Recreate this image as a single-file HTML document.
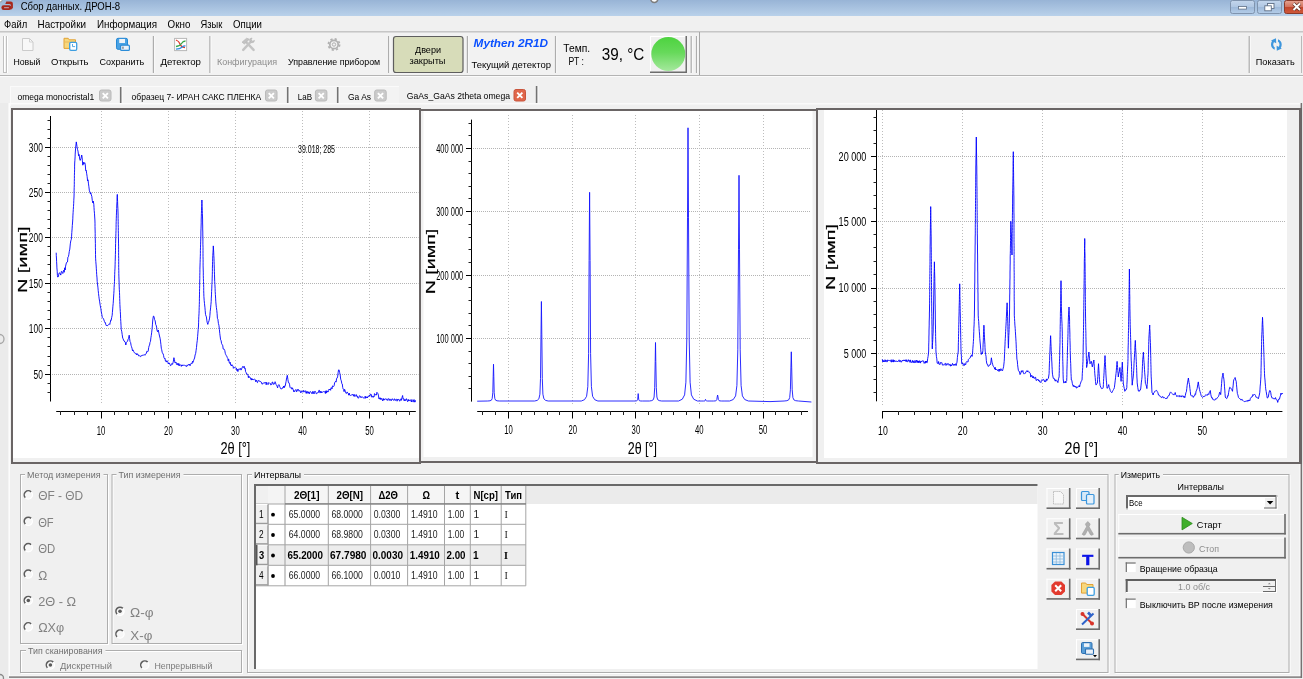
<!DOCTYPE html>
<html lang="ru"><head><meta charset="utf-8"><title>Сбор данных. ДРОН-8</title>
<style>
html,body{margin:0;padding:0;background:#f0f0f0;overflow:hidden}
body{width:1303px;height:679px;font-family:"Liberation Sans",sans-serif}
svg{display:block;position:absolute;left:0;top:0;will-change:transform}
text{white-space:pre}
</style></head><body>
<svg width="1303" height="679" viewBox="0 0 1303 679" font-family="'Liberation Sans', Arial, sans-serif" shape-rendering="auto">
<rect x="0" y="0" width="1303" height="679" fill="#f0f0f0" />
<defs><linearGradient id="tb" x1="0" y1="0" x2="0" y2="1"><stop offset="0" stop-color="#98b4d6"/><stop offset="1" stop-color="#b9d1ea"/></linearGradient><linearGradient id="wb" x1="0" y1="0" x2="0" y2="1"><stop offset="0" stop-color="#c4d6ec"/><stop offset="0.5" stop-color="#b0c7e3"/><stop offset="0.5" stop-color="#9db8d9"/><stop offset="1" stop-color="#b4cde8"/></linearGradient><linearGradient id="wc" x1="0" y1="0" x2="0" y2="1"><stop offset="0" stop-color="#e5a493"/><stop offset="0.5" stop-color="#d2705a"/><stop offset="0.5" stop-color="#c1452c"/><stop offset="1" stop-color="#d0593a"/></linearGradient><linearGradient id="gc" x1="0" y1="0" x2="0" y2="1"><stop offset="0" stop-color="#4dd33f"/><stop offset="0.45" stop-color="#66d95a"/><stop offset="1" stop-color="#a5e89d"/></linearGradient></defs>
<rect x="0" y="0" width="1303" height="16" fill="url(#tb)" />
<path d="M5.3 3.9 L6.3 1.6 H10.8 Q12.9 1.6 12.9 3.8 V8 L11.1 9.7 V5.8 Q11.1 4 9.4 3.9 Z" fill="#a8281c"/>
<rect x="1.4" y="5.2" width="10" height="4.9" rx="2.3" fill="#a6261b"/>
<rect x="4" y="7" width="5" height="1.3" rx="0.6" fill="#b9919a"/>
<circle cx="-0.2" cy="-0.4" r="2.5" fill="#fff" stroke="#a2a2a2" stroke-width="1.1"/>
<text x="20.7" y="10.0" font-size="10.3" textLength="99.5" lengthAdjust="spacingAndGlyphs">Сбор данных. ДРОН-8</text>
<rect x="1230.5" y="0.5" width="24" height="13" rx="2" fill="url(#wb)" stroke="#7f93ad"/>
<rect x="1238.5" y="6.5" width="8" height="2.6" fill="#fff" stroke="#5f6f86" stroke-width="0.8"/>
<rect x="1257.5" y="0.5" width="24" height="13" rx="2" fill="url(#wb)" stroke="#7f93ad"/>
<rect x="1267.5" y="3.5" width="6.5" height="5" fill="#fff" stroke="#5f6f86" stroke-width="0.9"/>
<rect x="1264.8" y="5.8" width="6.5" height="5" fill="#fff" stroke="#5f6f86" stroke-width="0.9"/>
<rect x="1284.5" y="0.5" width="24" height="13" rx="2" fill="url(#wc)" stroke="#8a3a2a"/>
<path d="M1293.5 3.5 l6.5 6.5 M1300 3.5 l-6.5 6.5" stroke="#5a2a20" stroke-width="3.2" fill="none"/>
<path d="M1293.5 3.5 l6.5 6.5 M1300 3.5 l-6.5 6.5" stroke="#ffffff" stroke-width="2" fill="none"/>
<circle cx="654.3" cy="-1.2" r="3.6" fill="#fff" stroke="#7d7d7d" stroke-width="1.5"/>
<text x="4.1" y="27.6" font-size="10.2" textLength="23.1" lengthAdjust="spacingAndGlyphs">Файл</text>
<text x="37.5" y="27.6" font-size="10.2" textLength="48.5" lengthAdjust="spacingAndGlyphs">Настройки</text>
<text x="97.0" y="27.6" font-size="10.2" textLength="60.0" lengthAdjust="spacingAndGlyphs">Информация</text>
<text x="167.6" y="27.6" font-size="10.2" textLength="22.8" lengthAdjust="spacingAndGlyphs">Окно</text>
<text x="200.5" y="27.6" font-size="10.2" textLength="21.8" lengthAdjust="spacingAndGlyphs">Язык</text>
<text x="233.0" y="27.6" font-size="10.2" textLength="29.0" lengthAdjust="spacingAndGlyphs">Опции</text>
<rect x="0" y="31" width="1303" height="1" fill="#c6c6c6" />
<rect x="0" y="32" width="1303" height="1" fill="#dadada" />
<rect x="0" y="33" width="699" height="42" fill="#f2f2f2" />
<rect x="0" y="75" width="1303" height="1" fill="#b4b4b4" />
<rect x="0" y="76" width="1303" height="1" fill="#fbfbfb" />
<rect x="3" y="36" width="1" height="37" fill="#c0c0c0" />
<rect x="4" y="36" width="1" height="37" fill="#ffffff" />
<rect x="6" y="36" width="1" height="37" fill="#c0c0c0" />
<rect x="7" y="36" width="1" height="37" fill="#ffffff" />
<rect x="3" y="72" width="4" height="1" fill="#c0c0c0" />
<text x="13.4" y="65.3" font-size="9.5" textLength="27.0" lengthAdjust="spacingAndGlyphs">Новый</text>
<text x="51.1" y="65.3" font-size="9.5" textLength="37.4" lengthAdjust="spacingAndGlyphs">Открыть</text>
<text x="99.5" y="65.3" font-size="9.5" textLength="44.8" lengthAdjust="spacingAndGlyphs">Сохранить</text>
<text x="160.4" y="65.3" font-size="9.5" textLength="40.6" lengthAdjust="spacingAndGlyphs">Детектор</text>
<text x="217.0" y="65.3" font-size="9.5" fill="#8c8c8c" textLength="60.0" lengthAdjust="spacingAndGlyphs">Конфигурация</text>
<text x="288.0" y="65.3" font-size="9.5" textLength="92.2" lengthAdjust="spacingAndGlyphs">Управление прибором</text>
<text x="1255.8" y="65.3" font-size="9.5" textLength="38.9" lengthAdjust="spacingAndGlyphs">Показать</text>
<rect x="152.8" y="36" width="1.3" height="37" fill="#adadad" />
<rect x="154.1" y="36" width="1" height="37" fill="#fafafa" />
<rect x="209.3" y="36" width="1.3" height="37" fill="#adadad" />
<rect x="210.6" y="36" width="1" height="37" fill="#fafafa" />
<rect x="388" y="36" width="1.3" height="37" fill="#adadad" />
<rect x="389.3" y="36" width="1" height="37" fill="#fafafa" />
<rect x="466.8" y="36" width="1.3" height="37" fill="#adadad" />
<rect x="468.1" y="36" width="1" height="37" fill="#fafafa" />
<rect x="554.9" y="36" width="1.3" height="37" fill="#adadad" />
<rect x="556.2" y="36" width="1" height="37" fill="#fafafa" />
<rect x="690.6" y="36" width="1.3" height="37" fill="#adadad" />
<rect x="691.9" y="36" width="1" height="37" fill="#fafafa" />
<rect x="695.9" y="36" width="1.3" height="37" fill="#adadad" />
<rect x="697.2" y="36" width="1" height="37" fill="#fafafa" />
<rect x="1248.6" y="36" width="1.3" height="37" fill="#adadad" />
<rect x="1249.9" y="36" width="1" height="37" fill="#fafafa" />
<rect x="1301" y="36" width="1" height="37" fill="#b9b9b9" />
<rect x="699" y="32" width="1" height="43" fill="#a6a6a6" />
<path d="M22.5 38.5 h7 l3.5 3.5 v8.5 h-10.5 z" fill="#f8f8f8" stroke="#c6c6c6" stroke-width="0.9"/>
<path d="M29.5 38.5 v3.5 h3.5" fill="none" stroke="#cfcfcf" stroke-width="0.9"/>
<path d="M64 38.3 h4.2 l1 1.5 h6.3 v8.6 h-11.5 z" fill="#f7d77d" stroke="#e2a234" stroke-width="1"/>
<path d="M64.5 42 h10.5" stroke="#e9b85a"/>
<rect x="69.7" y="42.3" width="7" height="8" rx="1.2" fill="#ffffff" stroke="#3e9ee0" stroke-width="1.3"/>
<path d="M72.5 44 v2.6 h2.6" fill="none" stroke="#59a9e3" stroke-width="1"/>
<rect x="116.5" y="38.3" width="11" height="11" rx="1.5" fill="#49a2e4" stroke="#2589d6" stroke-width="1"/>
<rect x="119.2" y="39" width="5.8" height="4" fill="#eef3f8"/>
<rect x="120.6" y="45.2" width="8.8" height="5.2" rx="1" fill="#e9f0f8" stroke="#2b8cd8" stroke-width="1.2"/>
<rect x="122.2" y="46.6" width="1.5" height="2.2" fill="#7b8a99"/>
<rect x="174.6" y="38.4" width="12" height="12.2" fill="#ffffff" stroke="#b7b7b7" stroke-width="1"/>
<path d="M176 40 q3 1 4 4 t5 3.5" fill="none" stroke="#e0362c" stroke-width="1.3"/>
<path d="M176 46.5 q4 -0.5 5.5 -3 t4 -2.5" fill="none" stroke="#3aa84a" stroke-width="1.3"/>
<path d="M176 49.2 q4 -0.3 6 -2 t3.5 -1.2" fill="none" stroke="#2f8fe0" stroke-width="1.3"/>
<path d="M243.2 49.8 L251 41.5 M253.6 49.8 L246 42" stroke="#c4c4c4" stroke-width="2.5" stroke-linecap="round" fill="none"/>
<path d="M242 42.2 L246.6 38.2 L249.4 39.2 L244.4 44 Z" fill="#c3c3c3" stroke="#b2b2b2" stroke-width="0.6"/>
<path d="M249.5 40.2 q0.4 -2.2 2.6 -2.2 l-1 1.8 l1.6 1.4 l1.8 -0.8 q-0.2 2.4 -2.6 2.4 q-1.2 0 -2.4 -2.6 z" fill="#c3c3c3" stroke="#b2b2b2" stroke-width="0.6"/>
<circle cx="334" cy="44.5" r="4.2" fill="none" stroke="#b1b1b1" stroke-width="1.7"/>
<circle cx="334" cy="44.5" r="5.6" fill="none" stroke="#b1b1b1" stroke-width="1.7" stroke-dasharray="2.2 2.2"/>
<circle cx="334" cy="44.5" r="1.7" fill="none" stroke="#a9a9a9" stroke-width="0.9"/>
<path d="M1274.5 39.5 q-3.5 1.2 -3.5 5 q0 3.5 3.6 5.2 l0.2 -2.2 q-1.6 -1 -1.6 -3 q0 -2 1.6 -3.2 z" fill="#3d96dd"/>
<path d="M1271 40.6 l5 -2.4 l0.2 5 z" fill="#3d96dd"/>
<path d="M1278.2 49.5 q3.5 -1.2 3.5 -5 q0 -3.5 -3.6 -5.2 l-0.2 2.2 q1.6 1 1.6 3 q0 2 -1.6 3.2 z" fill="#3d96dd"/>
<path d="M1281.8 48.4 l-5 2.4 l-0.2 -5 z" fill="#3d96dd"/>
<rect x="393.5" y="36.5" width="69.5" height="36" rx="2.5" fill="#d7dcb9" stroke="#5e5e5e" stroke-width="1.2"/>
<text x="428.0" y="53.0" font-size="9.7" text-anchor="middle" textLength="26.0" lengthAdjust="spacingAndGlyphs">Двери</text>
<text x="427.5" y="63.5" font-size="9.7" text-anchor="middle" textLength="36.0" lengthAdjust="spacingAndGlyphs">закрыты</text>
<text x="473.6" y="47.2" font-size="10.4" fill="#0a50ff" font-weight="bold" font-style="italic" textLength="74.5" lengthAdjust="spacingAndGlyphs">Mythen 2R1D</text>
<text x="471.5" y="68.0" font-size="9.2" textLength="79.5" lengthAdjust="spacingAndGlyphs">Текущий детектор</text>
<text x="563.3" y="52.0" font-size="10.2" textLength="26.8" lengthAdjust="spacingAndGlyphs">Темп.</text>
<text x="568.5" y="65.0" font-size="10.2" textLength="15.5" lengthAdjust="spacingAndGlyphs">РТ :</text>
<text x="601.8" y="60.0" font-size="16" textLength="42.5" lengthAdjust="spacingAndGlyphs">39, °C</text>
<rect x="650" y="36" width="37" height="37" fill="#f0f0f0" />
<rect x="650" y="36" width="37" height="1" fill="#ffffff" />
<rect x="650" y="36" width="1" height="37" fill="#ffffff" />
<rect x="650" y="71.5" width="37" height="1.5" fill="#6d6d6d" />
<rect x="685.5" y="36" width="1.5" height="37" fill="#6d6d6d" />
<circle cx="668.3" cy="54" r="17" fill="url(#gc)"/>
<rect x="10" y="86" width="389" height="1" fill="#fafafa" />
<rect x="10" y="86" width="1" height="20" fill="#fafafa" />
<rect x="11" y="87" width="388" height="17" fill="#f3f3f3" />
<rect x="9" y="103.2" width="1292" height="1.2" fill="#fdfdfd" />
<rect x="8.6" y="103.2" width="1.3" height="574" fill="#fdfdfd" />
<text x="17.5" y="99.8" font-size="9.8" textLength="76.7" lengthAdjust="spacingAndGlyphs">omega monocristal1</text>
<rect x="99.5" y="90" width="11.5" height="11" rx="2" fill="#cbcbcb" stroke="#bababa" stroke-width="1"/>
<path d="M102.7 93.2 l5.2 5.2 M107.9 93.2 l-5.2 5.2" stroke="#ffffff" stroke-width="1.9" fill="none"/>
<rect x="119.9" y="87" width="1.8" height="16" fill="#727272" />
<rect x="121.7" y="87" width="0.9" height="16" fill="#fafafa" />
<text x="131.6" y="99.8" font-size="9.8" textLength="129.7" lengthAdjust="spacingAndGlyphs">образец 7- ИРАН САКС ПЛЕНКА</text>
<rect x="265.5" y="90" width="11.5" height="11" rx="2" fill="#cbcbcb" stroke="#bababa" stroke-width="1"/>
<path d="M268.7 93.2 l5.2 5.2 M273.9 93.2 l-5.2 5.2" stroke="#ffffff" stroke-width="1.9" fill="none"/>
<rect x="286.9" y="87" width="1.8" height="16" fill="#727272" />
<rect x="288.7" y="87" width="0.9" height="16" fill="#fafafa" />
<text x="297.8" y="99.8" font-size="9.8" textLength="14.2" lengthAdjust="spacingAndGlyphs">LaB</text>
<rect x="315.4" y="90" width="11.5" height="11" rx="2" fill="#cbcbcb" stroke="#bababa" stroke-width="1"/>
<path d="M318.6 93.2 l5.2 5.2 M323.8 93.2 l-5.2 5.2" stroke="#ffffff" stroke-width="1.9" fill="none"/>
<rect x="336.9" y="87" width="1.8" height="16" fill="#727272" />
<rect x="338.7" y="87" width="0.9" height="16" fill="#fafafa" />
<text x="348.0" y="99.8" font-size="9.8" textLength="23.0" lengthAdjust="spacingAndGlyphs">Ga As</text>
<rect x="374.7" y="90" width="11.5" height="11" rx="2" fill="#cbcbcb" stroke="#bababa" stroke-width="1"/>
<path d="M377.9 93.2 l5.2 5.2 M383.1 93.2 l-5.2 5.2" stroke="#ffffff" stroke-width="1.9" fill="none"/>
<text x="406.8" y="99.4" font-size="9.8" textLength="103.2" lengthAdjust="spacingAndGlyphs">GaAs_GaAs 2theta omega</text>
<rect x="514" y="89.5" width="11.5" height="11.5" rx="2" fill="#e0664a" stroke="#c9553d" stroke-width="1"/>
<path d="M517.2 92.7 l5.2 5.2 M522.4 92.7 l-5.2 5.2" stroke="#ffffff" stroke-width="1.9" fill="none"/>
<rect x="535.8" y="86" width="1.8" height="17" fill="#727272" />
<rect x="537.6" y="86" width="0.9" height="17" fill="#fafafa" />
<rect x="0" y="103" width="8" height="576" fill="#ebebeb" />
<circle cx="-0.5" cy="339" r="4.5" fill="none" stroke="#a6a6a6" stroke-width="1.3"/>
<circle cx="0" cy="678" r="3.5" fill="none" stroke="#8a8a8a" stroke-width="1.3"/>
<rect x="9" y="675.5" width="1291" height="1" fill="#fbfbfb" />
<rect x="1299.5" y="464" width="1" height="212" fill="#fbfbfb" />
<rect x="9" y="676.4" width="1293" height="1.4" fill="#767272" />
<rect x="1300.6" y="103" width="1.5" height="575" fill="#767272" />
<rect x="21.5" y="475.5" width="87" height="169" fill="none" stroke="#ffffff"/>
<rect x="20.5" y="474.5" width="87" height="169" fill="none" stroke="#adadad"/>
<rect x="25" y="469" width="78.5" height="10" fill="#f0f0f0" />
<text x="27.0" y="478.1" font-size="9.2" fill="#6f6f6f" textLength="73.5" lengthAdjust="spacingAndGlyphs">Метод измерения</text>
<rect x="113" y="475.5" width="129.5" height="169" fill="none" stroke="#ffffff"/>
<rect x="112" y="474.5" width="129.5" height="169" fill="none" stroke="#adadad"/>
<rect x="116.5" y="469" width="67" height="10" fill="#f0f0f0" />
<text x="118.5" y="478.1" font-size="9.2" fill="#6f6f6f" textLength="62.0" lengthAdjust="spacingAndGlyphs">Тип измерения</text>
<rect x="21.5" y="651.5" width="221" height="22" fill="none" stroke="#ffffff"/>
<rect x="20.5" y="650.5" width="221" height="22" fill="none" stroke="#adadad"/>
<rect x="26" y="645" width="79.5" height="10" fill="#f0f0f0" />
<text x="28.0" y="654.1" font-size="9.2" fill="#6f6f6f" textLength="74.5" lengthAdjust="spacingAndGlyphs">Тип сканирования</text>
<circle cx="28.3" cy="494.9" r="4.3" fill="#f7f7f7"/>
<path d="M31.2 492 A4.1 4.1 0 0 0 25.4 497.8" fill="none" stroke="#5c5c5c" stroke-width="1.5"/>
<path d="M31.2 492 A4.1 4.1 0 0 1 25.4 497.8" fill="none" stroke="#ffffff" stroke-width="1.3"/>
<text x="38.2" y="500.3" font-size="12" fill="#828282" textLength="45.0" lengthAdjust="spacingAndGlyphs">ΘF - ΘD</text>
<circle cx="28.3" cy="521.3" r="4.3" fill="#f7f7f7"/>
<path d="M31.2 518.4 A4.1 4.1 0 0 0 25.4 524.2" fill="none" stroke="#5c5c5c" stroke-width="1.5"/>
<path d="M31.2 518.4 A4.1 4.1 0 0 1 25.4 524.2" fill="none" stroke="#ffffff" stroke-width="1.3"/>
<text x="38.2" y="526.7" font-size="12" fill="#828282" textLength="15.5" lengthAdjust="spacingAndGlyphs">ΘF</text>
<circle cx="28.3" cy="547.7" r="4.3" fill="#f7f7f7"/>
<path d="M31.2 544.8 A4.1 4.1 0 0 0 25.4 550.6" fill="none" stroke="#5c5c5c" stroke-width="1.5"/>
<path d="M31.2 544.8 A4.1 4.1 0 0 1 25.4 550.6" fill="none" stroke="#ffffff" stroke-width="1.3"/>
<text x="38.2" y="553.1" font-size="12" fill="#828282" textLength="17.0" lengthAdjust="spacingAndGlyphs">ΘD</text>
<circle cx="28.3" cy="574.1" r="4.3" fill="#f7f7f7"/>
<path d="M31.2 571.2 A4.1 4.1 0 0 0 25.4 577" fill="none" stroke="#5c5c5c" stroke-width="1.5"/>
<path d="M31.2 571.2 A4.1 4.1 0 0 1 25.4 577" fill="none" stroke="#ffffff" stroke-width="1.3"/>
<text x="38.2" y="579.5" font-size="12" fill="#828282" textLength="9.0" lengthAdjust="spacingAndGlyphs">Ω</text>
<circle cx="28.3" cy="600.5" r="4.3" fill="#f7f7f7"/>
<path d="M31.2 597.6 A4.1 4.1 0 0 0 25.4 603.4" fill="none" stroke="#5c5c5c" stroke-width="1.5"/>
<path d="M31.2 597.6 A4.1 4.1 0 0 1 25.4 603.4" fill="none" stroke="#ffffff" stroke-width="1.3"/>
<circle cx="28.3" cy="600.5" r="1.8" fill="#5a5a5a"/>
<text x="38.2" y="605.9" font-size="12" fill="#828282" textLength="38.0" lengthAdjust="spacingAndGlyphs">2Θ - Ω</text>
<circle cx="28.3" cy="626.9" r="4.3" fill="#f7f7f7"/>
<path d="M31.2 624 A4.1 4.1 0 0 0 25.4 629.8" fill="none" stroke="#5c5c5c" stroke-width="1.5"/>
<path d="M31.2 624 A4.1 4.1 0 0 1 25.4 629.8" fill="none" stroke="#ffffff" stroke-width="1.3"/>
<text x="38.2" y="632.3" font-size="12" fill="#828282" textLength="26.0" lengthAdjust="spacingAndGlyphs">ΩXφ</text>
<circle cx="120" cy="611.3" r="4.3" fill="#f7f7f7"/>
<path d="M122.9 608.4 A4.1 4.1 0 0 0 117.1 614.2" fill="none" stroke="#5c5c5c" stroke-width="1.5"/>
<path d="M122.9 608.4 A4.1 4.1 0 0 1 117.1 614.2" fill="none" stroke="#ffffff" stroke-width="1.3"/>
<circle cx="120" cy="611.3" r="1.8" fill="#5a5a5a"/>
<text x="130.0" y="617.0" font-size="12" fill="#828282" textLength="23.5" lengthAdjust="spacingAndGlyphs">Ω-φ</text>
<circle cx="120" cy="634" r="4.3" fill="#f7f7f7"/>
<path d="M122.9 631.1 A4.1 4.1 0 0 0 117.1 636.9" fill="none" stroke="#5c5c5c" stroke-width="1.5"/>
<path d="M122.9 631.1 A4.1 4.1 0 0 1 117.1 636.9" fill="none" stroke="#ffffff" stroke-width="1.3"/>
<text x="130.3" y="639.7" font-size="12" fill="#828282" textLength="22.0" lengthAdjust="spacingAndGlyphs">X-φ</text>
<circle cx="50.4" cy="665" r="4.3" fill="#f7f7f7"/>
<path d="M53.3 662.1 A4.1 4.1 0 0 0 47.5 667.9" fill="none" stroke="#5c5c5c" stroke-width="1.5"/>
<path d="M53.3 662.1 A4.1 4.1 0 0 1 47.5 667.9" fill="none" stroke="#ffffff" stroke-width="1.3"/>
<circle cx="50.4" cy="665" r="1.8" fill="#5a5a5a"/>
<text x="60.0" y="669.0" font-size="9.2" fill="#7a7a7a" textLength="52.0" lengthAdjust="spacingAndGlyphs">Дискретный</text>
<circle cx="144.8" cy="665" r="4.3" fill="#f7f7f7"/>
<path d="M147.7 662.1 A4.1 4.1 0 0 0 141.9 667.9" fill="none" stroke="#5c5c5c" stroke-width="1.5"/>
<path d="M147.7 662.1 A4.1 4.1 0 0 1 141.9 667.9" fill="none" stroke="#ffffff" stroke-width="1.3"/>
<text x="154.4" y="669.0" font-size="9.2" fill="#7a7a7a" textLength="58.0" lengthAdjust="spacingAndGlyphs">Непрерывный</text>
<rect x="248.5" y="475.5" width="860.5" height="198" fill="none" stroke="#ffffff"/>
<rect x="247.5" y="474.5" width="860.5" height="198" fill="none" stroke="#adadad"/>
<rect x="252" y="469" width="52" height="10" fill="#f0f0f0" />
<text x="254.0" y="478.1" font-size="9.2" textLength="47.0" lengthAdjust="spacingAndGlyphs">Интервалы</text>
<rect x="254" y="484" width="783.5" height="185" fill="#ffffff" />
<rect x="254" y="484" width="783.5" height="2" fill="#696969" />
<rect x="254" y="484" width="2" height="185" fill="#696969" />
<rect x="256" y="486" width="781.5" height="18" fill="#ebebeb" />
<rect x="256" y="486" width="12" height="100" fill="#f0f0f0" />
<rect x="268" y="486" width="17" height="18" fill="#f4f4f4" />
<rect x="285" y="486" width="240.8" height="18" fill="#f5f5f5" />
<rect x="268" y="544.8" width="257.8" height="20.5" fill="#ededed" />
<rect x="284.5" y="486" width="1" height="99.8" fill="#a5a5a5" />
<rect x="327.8" y="486" width="1" height="99.8" fill="#a5a5a5" />
<rect x="370.1" y="486" width="1" height="99.8" fill="#a5a5a5" />
<rect x="407.1" y="486" width="1" height="99.8" fill="#a5a5a5" />
<rect x="444" y="486" width="1" height="99.8" fill="#a5a5a5" />
<rect x="469.8" y="486" width="1" height="99.8" fill="#a5a5a5" />
<rect x="500.7" y="486" width="1" height="99.8" fill="#a5a5a5" />
<rect x="525.3" y="486" width="1" height="99.8" fill="#a5a5a5" />
<rect x="267.5" y="504" width="1" height="82" fill="#6e6e6e" />
<rect x="284.5" y="504" width="1" height="82" fill="#c4c4c4" />
<rect x="256" y="503.5" width="269.8" height="1" fill="#a5a5a5" />
<rect x="256" y="523.8" width="269.8" height="1" fill="#a5a5a5" />
<rect x="256" y="544.3" width="269.8" height="1" fill="#a5a5a5" />
<rect x="256" y="564.8" width="269.8" height="1" fill="#a5a5a5" />
<rect x="256" y="585.3" width="269.8" height="1" fill="#a5a5a5" />
<rect x="285" y="503.3" width="241" height="1.2" fill="#7a7a7a" />
<rect x="256" y="504" width="11.5" height="1" fill="#ffffff" />
<rect x="256" y="522.8" width="11.5" height="1" fill="#8a8a8a" />
<rect x="256" y="524.3" width="11.5" height="1" fill="#ffffff" />
<rect x="256" y="543.3" width="11.5" height="1" fill="#8a8a8a" />
<rect x="256" y="544.8" width="11.5" height="1" fill="#ffffff" />
<rect x="256" y="563.8" width="11.5" height="1" fill="#8a8a8a" />
<rect x="256" y="565.3" width="11.5" height="1" fill="#ffffff" />
<rect x="256" y="584.3" width="11.5" height="1" fill="#8a8a8a" />
<rect x="256" y="544.8" width="1.5" height="20.5" fill="#555" />
<text x="294.0" y="499.0" font-size="10.3" font-weight="bold" textLength="25.5" lengthAdjust="spacingAndGlyphs">2Θ[1]</text>
<text x="336.5" y="499.0" font-size="10.3" font-weight="bold" textLength="26.5" lengthAdjust="spacingAndGlyphs">2Θ[N]</text>
<text x="378.5" y="499.0" font-size="10.3" font-weight="bold" textLength="19.5" lengthAdjust="spacingAndGlyphs">Δ2Θ</text>
<text x="422.5" y="499.0" font-size="10.3" font-weight="bold" textLength="7.5" lengthAdjust="spacingAndGlyphs">Ω</text>
<text x="455.5" y="499.0" font-size="10.3" font-weight="bold" textLength="3.8" lengthAdjust="spacingAndGlyphs">t</text>
<text x="473.5" y="499.0" font-size="10.3" font-weight="bold" textLength="24.5" lengthAdjust="spacingAndGlyphs">N[cp]</text>
<text x="505.0" y="499.0" font-size="10.3" font-weight="bold" textLength="17.0" lengthAdjust="spacingAndGlyphs">Тип</text>
<text x="259.0" y="518.0" font-size="10.6" textLength="4.6" lengthAdjust="spacingAndGlyphs">1</text>
<circle cx="273" cy="514.7" r="1.9" fill="#000"/>
<text x="288.8" y="518.0" font-size="10.1" fill="#222" textLength="31.3" lengthAdjust="spacingAndGlyphs">65.0000</text>
<text x="331.4" y="518.0" font-size="10.1" fill="#222" textLength="31.5" lengthAdjust="spacingAndGlyphs">68.0000</text>
<text x="373.8" y="518.0" font-size="10.1" fill="#222" textLength="26.5" lengthAdjust="spacingAndGlyphs">0.0300</text>
<text x="411.0" y="518.0" font-size="10.1" fill="#222" textLength="26.5" lengthAdjust="spacingAndGlyphs">1.4910</text>
<text x="447.8" y="518.0" font-size="10.1" fill="#222" textLength="16.5" lengthAdjust="spacingAndGlyphs">1.00</text>
<text x="473.5" y="518.0" font-size="10.1" fill="#222">1</text>
<text x="504.5" y="518.0" font-size="10.1" fill="#222" font-family="Liberation Serif, serif">I</text>
<text x="259.0" y="538.3" font-size="10.6" textLength="4.6" lengthAdjust="spacingAndGlyphs">2</text>
<circle cx="273" cy="535" r="1.9" fill="#000"/>
<text x="288.8" y="538.3" font-size="10.1" fill="#222" textLength="31.3" lengthAdjust="spacingAndGlyphs">64.0000</text>
<text x="331.4" y="538.3" font-size="10.1" fill="#222" textLength="31.5" lengthAdjust="spacingAndGlyphs">68.9800</text>
<text x="373.8" y="538.3" font-size="10.1" fill="#222" textLength="26.5" lengthAdjust="spacingAndGlyphs">0.0300</text>
<text x="411.0" y="538.3" font-size="10.1" fill="#222" textLength="26.5" lengthAdjust="spacingAndGlyphs">1.4910</text>
<text x="447.8" y="538.3" font-size="10.1" fill="#222" textLength="16.5" lengthAdjust="spacingAndGlyphs">1.00</text>
<text x="473.5" y="538.3" font-size="10.1" fill="#222">1</text>
<text x="504.5" y="538.3" font-size="10.1" fill="#222" font-family="Liberation Serif, serif">I</text>
<text x="259.0" y="558.8" font-size="10.6" font-weight="bold" textLength="5.2" lengthAdjust="spacingAndGlyphs">3</text>
<circle cx="273" cy="555.5" r="1.9" fill="#000"/>
<text x="287.5" y="558.8" font-size="10.1" font-weight="bold" textLength="35.5" lengthAdjust="spacingAndGlyphs">65.2000</text>
<text x="330.0" y="558.8" font-size="10.1" font-weight="bold" textLength="36.5" lengthAdjust="spacingAndGlyphs">67.7980</text>
<text x="372.5" y="558.8" font-size="10.1" font-weight="bold" textLength="30.5" lengthAdjust="spacingAndGlyphs">0.0030</text>
<text x="409.8" y="558.8" font-size="10.1" font-weight="bold" textLength="30.0" lengthAdjust="spacingAndGlyphs">1.4910</text>
<text x="446.5" y="558.8" font-size="10.1" font-weight="bold" textLength="19.0" lengthAdjust="spacingAndGlyphs">2.00</text>
<text x="473.0" y="558.8" font-size="10.1" font-weight="bold">1</text>
<text x="504.0" y="558.8" font-size="10.1" font-weight="bold" font-family="Liberation Serif, serif">I</text>
<text x="259.0" y="579.3" font-size="10.6" textLength="4.6" lengthAdjust="spacingAndGlyphs">4</text>
<circle cx="273" cy="576" r="1.9" fill="#000"/>
<text x="288.8" y="579.3" font-size="10.1" fill="#222" textLength="31.3" lengthAdjust="spacingAndGlyphs">66.0000</text>
<text x="331.4" y="579.3" font-size="10.1" fill="#222" textLength="31.5" lengthAdjust="spacingAndGlyphs">66.1000</text>
<text x="373.8" y="579.3" font-size="10.1" fill="#222" textLength="26.5" lengthAdjust="spacingAndGlyphs">0.0010</text>
<text x="411.0" y="579.3" font-size="10.1" fill="#222" textLength="26.5" lengthAdjust="spacingAndGlyphs">1.4910</text>
<text x="447.8" y="579.3" font-size="10.1" fill="#222" textLength="16.5" lengthAdjust="spacingAndGlyphs">1.00</text>
<text x="473.5" y="579.3" font-size="10.1" fill="#222">1</text>
<text x="504.5" y="579.3" font-size="10.1" fill="#222" font-family="Liberation Serif, serif">I</text>
<rect x="1046.5" y="488" width="24" height="21" fill="#f0f0f0" />
<rect x="1046.5" y="488" width="24" height="1" fill="#ffffff" />
<rect x="1046.5" y="488" width="1" height="21" fill="#ffffff" />
<rect x="1046.5" y="507.4" width="24" height="1.6" fill="#6c6c6c" />
<rect x="1068.9" y="488" width="1.6" height="21" fill="#6c6c6c" />
<rect x="1076" y="488" width="24" height="21" fill="#f0f0f0" />
<rect x="1076" y="488" width="24" height="1" fill="#ffffff" />
<rect x="1076" y="488" width="1" height="21" fill="#ffffff" />
<rect x="1076" y="507.4" width="24" height="1.6" fill="#6c6c6c" />
<rect x="1098.4" y="488" width="1.6" height="21" fill="#6c6c6c" />
<rect x="1046.5" y="518.3" width="24" height="21" fill="#f0f0f0" />
<rect x="1046.5" y="518.3" width="24" height="1" fill="#ffffff" />
<rect x="1046.5" y="518.3" width="1" height="21" fill="#ffffff" />
<rect x="1046.5" y="537.7" width="24" height="1.6" fill="#6c6c6c" />
<rect x="1068.9" y="518.3" width="1.6" height="21" fill="#6c6c6c" />
<rect x="1076" y="518.3" width="24" height="21" fill="#f0f0f0" />
<rect x="1076" y="518.3" width="24" height="1" fill="#ffffff" />
<rect x="1076" y="518.3" width="1" height="21" fill="#ffffff" />
<rect x="1076" y="537.7" width="24" height="1.6" fill="#6c6c6c" />
<rect x="1098.4" y="518.3" width="1.6" height="21" fill="#6c6c6c" />
<rect x="1046.5" y="548.5" width="24" height="21" fill="#f0f0f0" />
<rect x="1046.5" y="548.5" width="24" height="1" fill="#ffffff" />
<rect x="1046.5" y="548.5" width="1" height="21" fill="#ffffff" />
<rect x="1046.5" y="567.9" width="24" height="1.6" fill="#6c6c6c" />
<rect x="1068.9" y="548.5" width="1.6" height="21" fill="#6c6c6c" />
<rect x="1076" y="548.5" width="24" height="21" fill="#f0f0f0" />
<rect x="1076" y="548.5" width="24" height="1" fill="#ffffff" />
<rect x="1076" y="548.5" width="1" height="21" fill="#ffffff" />
<rect x="1076" y="567.9" width="24" height="1.6" fill="#6c6c6c" />
<rect x="1098.4" y="548.5" width="1.6" height="21" fill="#6c6c6c" />
<rect x="1046.5" y="578.7" width="24" height="21" fill="#f0f0f0" />
<rect x="1046.5" y="578.7" width="24" height="1" fill="#ffffff" />
<rect x="1046.5" y="578.7" width="1" height="21" fill="#ffffff" />
<rect x="1046.5" y="598.1" width="24" height="1.6" fill="#6c6c6c" />
<rect x="1068.9" y="578.7" width="1.6" height="21" fill="#6c6c6c" />
<rect x="1076" y="578.7" width="24" height="21" fill="#f0f0f0" />
<rect x="1076" y="578.7" width="24" height="1" fill="#ffffff" />
<rect x="1076" y="578.7" width="1" height="21" fill="#ffffff" />
<rect x="1076" y="598.1" width="24" height="1.6" fill="#6c6c6c" />
<rect x="1098.4" y="578.7" width="1.6" height="21" fill="#6c6c6c" />
<rect x="1076" y="609" width="24" height="21" fill="#f0f0f0" />
<rect x="1076" y="609" width="24" height="1" fill="#ffffff" />
<rect x="1076" y="609" width="1" height="21" fill="#ffffff" />
<rect x="1076" y="628.4" width="24" height="1.6" fill="#6c6c6c" />
<rect x="1098.4" y="609" width="1.6" height="21" fill="#6c6c6c" />
<rect x="1076" y="639.2" width="24" height="21" fill="#f0f0f0" />
<rect x="1076" y="639.2" width="24" height="1" fill="#ffffff" />
<rect x="1076" y="639.2" width="1" height="21" fill="#ffffff" />
<rect x="1076" y="658.6" width="24" height="1.6" fill="#6c6c6c" />
<rect x="1098.4" y="639.2" width="1.6" height="21" fill="#6c6c6c" />
<path d="M1053.5 491.5 h7 l3 3 v9.5 h-10 z" fill="#f7f7f7" stroke="#b8b8b8" stroke-dasharray="1.2 0.7"/>
<rect x="1081.5" y="491.5" width="7.5" height="9" rx="1" fill="#d6e9f8" stroke="#3a95dc" stroke-width="1.2"/>
<rect x="1086.5" y="494.5" width="7.5" height="9.5" rx="1" fill="#e4f0fa" stroke="#3a95dc" stroke-width="1.2"/>
<text x="1053.0" y="534.8" font-size="17.5" fill="#bcbcbc" font-weight="bold" textLength="11.0" lengthAdjust="spacingAndGlyphs">Σ</text>
<path d="M1087.8 521.5 l2.4 2.6 l-1.2 2.6 l4.4 7.6 q-1.6 1.6 -3 0.4 l-2.6 -5 l-2.6 5 q-1.6 1.2 -3 -0.4 l4.4 -7.6 l-1.2 -2.6 z" fill="#b0b0b0" stroke="#9c9c9c" stroke-width="0.6"/>
<rect x="1052.5" y="552.5" width="11.5" height="12" fill="#eaf3fb" stroke="#3a8fd6" stroke-width="1.2"/>
<path d="M1053 556 h11 M1053 559 h11 M1053 562 h11 M1056.3 553 v11 M1060 553 v11" stroke="#8db9de" stroke-width="0.8"/>
<text x="1082.2" y="564.6" font-size="14.5" fill="#0a12e8" font-weight="bold" textLength="11.0" lengthAdjust="spacingAndGlyphs" stroke="#0a12e8" stroke-width="0.5">T</text>
<path d="M1055 581.5 h6.4 l3.6 3.6 v6.4 l-3.6 3.6 h-6.4 l-3.6 -3.6 v-6.4 z" fill="#e23a2e"/>
<path d="M1055.2 585.2 l6 6 M1061.2 585.2 l-6 6" stroke="#fff" stroke-width="2"/>
<path d="M1081.5 583 h4.2 l1 1.5 h6.3 v8.6 h-11.5 z" fill="#f7d77d" stroke="#e2a234" stroke-width="1"/>
<rect x="1087.2" y="587.3" width="7" height="8" rx="1.2" fill="#ffffff" stroke="#3e9ee0" stroke-width="1.3"/>
<path d="M1081.5 613 l11.5 11.5" stroke="#d8342a" stroke-width="2"/>
<path d="M1093.5 613.5 l-11.5 11" stroke="#2e62c9" stroke-width="2"/>
<circle cx="1082.5" cy="614" r="2" fill="#d8342a"/><circle cx="1092" cy="623.5" r="2" fill="#d8342a"/>
<path d="M1088 612.5 l3 3" stroke="#2e62c9" stroke-width="2.6"/>
<rect x="1081.5" y="642.5" width="10.5" height="11" rx="1.2" fill="#5a9fd8" stroke="#2d6fb0" stroke-width="1"/>
<rect x="1084" y="643.3" width="5.5" height="3.6" fill="#eef3f8"/>
<rect x="1085.5" y="649" width="8" height="5.2" rx="0.8" fill="#e9f0f8" stroke="#2d6fb0" stroke-width="1.1"/>
<path d="M1093 655 h4 l-2 2.2 z" fill="#000"/>
<rect x="1116" y="475.5" width="174" height="198" fill="none" stroke="#ffffff"/>
<rect x="1115" y="474.5" width="174" height="198" fill="none" stroke="#adadad"/>
<rect x="1118.7" y="469" width="44.3" height="10" fill="#f0f0f0" />
<text x="1120.7" y="478.1" font-size="9.2" textLength="39.3" lengthAdjust="spacingAndGlyphs">Измерить</text>
<text x="1177.6" y="490.2" font-size="8.9" textLength="46.4" lengthAdjust="spacingAndGlyphs">Интервалы</text>
<rect x="1126" y="495" width="151.5" height="14.5" fill="#ffffff" />
<rect x="1126" y="495" width="151.5" height="2" fill="#696969" />
<rect x="1126" y="495" width="2" height="14.5" fill="#696969" />
<rect x="1126" y="508.5" width="151.5" height="1" fill="#ffffff" />
<rect x="1276.5" y="495" width="1" height="14.5" fill="#ffffff" />
<text x="1129.0" y="506.0" font-size="9.2" textLength="13.5" lengthAdjust="spacingAndGlyphs">Все</text>
<rect x="1264" y="497" width="12.5" height="11.5" fill="#f0f0f0" />
<rect x="1264" y="497" width="12.5" height="1" fill="#fff" />
<rect x="1264" y="497" width="1" height="11.5" fill="#fff" />
<rect x="1264" y="507.5" width="12.5" height="1" fill="#696969" />
<rect x="1275.5" y="497" width="1" height="11.5" fill="#696969" />
<path d="M1266.8 501 h6.6 l-3.3 3.6 z" fill="#000"/>
<rect x="1118.3" y="514" width="167.5" height="20.5" fill="#f0f0f0" />
<rect x="1118.3" y="514" width="167.5" height="1" fill="#ffffff" />
<rect x="1118.3" y="514" width="1" height="20.5" fill="#ffffff" />
<rect x="1118.3" y="532.9" width="167.5" height="1.6" fill="#6c6c6c" />
<rect x="1284.2" y="514" width="1.6" height="20.5" fill="#6c6c6c" />
<path d="M1182 517.3 l10.3 6.2 l-10.3 6.4 z" fill="#3fae2a" stroke="#2c8a1c" stroke-width="0.8"/>
<text x="1196.8" y="528.3" font-size="9.3" textLength="24.8" lengthAdjust="spacingAndGlyphs">Старт</text>
<rect x="1118.3" y="537.5" width="167.5" height="21" fill="#f0f0f0" />
<rect x="1118.3" y="537.5" width="167.5" height="1" fill="#ffffff" />
<rect x="1118.3" y="537.5" width="1" height="21" fill="#ffffff" />
<rect x="1118.3" y="556.9" width="167.5" height="1.6" fill="#6c6c6c" />
<rect x="1284.2" y="537.5" width="1.6" height="21" fill="#6c6c6c" />
<circle cx="1188.8" cy="547.5" r="5.6" fill="#bdbdbd" stroke="#a8a8a8" stroke-width="1"/>
<text x="1199.0" y="551.5" font-size="9.3" fill="#8c8c8c" textLength="20.0" lengthAdjust="spacingAndGlyphs">Стоп</text>
<rect x="1125.7" y="562.4" width="10" height="9.6" fill="#ffffff" />
<rect x="1125.7" y="562.4" width="10" height="1.2" fill="#6e6e6e" />
<rect x="1125.7" y="562.4" width="1.2" height="9.6" fill="#6e6e6e" />
<rect x="1125.7" y="598.5" width="10" height="9.6" fill="#ffffff" />
<rect x="1125.7" y="598.5" width="10" height="1.2" fill="#6e6e6e" />
<rect x="1125.7" y="598.5" width="1.2" height="9.6" fill="#6e6e6e" />
<text x="1139.7" y="571.6" font-size="9.2" textLength="78.0" lengthAdjust="spacingAndGlyphs">Вращение образца</text>
<text x="1139.7" y="607.6" font-size="9.2" textLength="133.2" lengthAdjust="spacingAndGlyphs">Выключить ВР после измерения</text>
<rect x="1125.7" y="579" width="151" height="13.8" fill="#f0f0f0" />
<rect x="1125.7" y="579" width="151" height="2" fill="#5f5f5f" />
<rect x="1125.7" y="579" width="2" height="13.8" fill="#5f5f5f" />
<rect x="1125.7" y="592" width="151" height="1" fill="#ffffff" />
<rect x="1276" y="579" width="1" height="13.8" fill="#ffffff" />
<text x="1194.0" y="589.5" font-size="9.4" fill="#8c8c8c" text-anchor="middle" textLength="32.0" lengthAdjust="spacingAndGlyphs">1.0 об/с</text>
<rect x="1263" y="581" width="13" height="5.5" fill="#f0f0f0" />
<rect x="1263" y="586" width="13" height="1" fill="#696969" />
<rect x="1275" y="581" width="1" height="11" fill="#696969" />
<rect x="1263" y="591" width="13" height="1" fill="#696969" />
<path d="M1267.8 584.3 h3 l-1.5 -1.6 z M1267.8 588 h3 l-1.5 1.6 z" fill="#8c8c8c"/>
<rect x="11" y="108" width="410" height="356" fill="#6a6565" />
<rect x="13" y="110" width="406" height="352" fill="#f0f0f0" />
<rect x="13" y="110" width="406" height="348" fill="#ffffff" />
<line x1="52" y1="374.5" x2="418.5" y2="374.5" stroke="#b4b4b4" stroke-width="1" stroke-dasharray="1 1"/>
<line x1="52" y1="328.5" x2="418.5" y2="328.5" stroke="#b4b4b4" stroke-width="1" stroke-dasharray="1 1"/>
<line x1="52" y1="283.5" x2="418.5" y2="283.5" stroke="#b4b4b4" stroke-width="1" stroke-dasharray="1 1"/>
<line x1="52" y1="237.5" x2="418.5" y2="237.5" stroke="#b4b4b4" stroke-width="1" stroke-dasharray="1 1"/>
<line x1="52" y1="192.5" x2="418.5" y2="192.5" stroke="#b4b4b4" stroke-width="1" stroke-dasharray="1 1"/>
<line x1="52" y1="147.5" x2="418.5" y2="147.5" stroke="#b4b4b4" stroke-width="1" stroke-dasharray="1 1"/>
<line x1="101.5" y1="111" x2="101.5" y2="405" stroke="#bdbdbd" stroke-width="1" stroke-dasharray="1 2"/>
<line x1="168.5" y1="111" x2="168.5" y2="405" stroke="#bdbdbd" stroke-width="1" stroke-dasharray="1 2"/>
<line x1="235.5" y1="111" x2="235.5" y2="405" stroke="#bdbdbd" stroke-width="1" stroke-dasharray="1 2"/>
<line x1="302.5" y1="111" x2="302.5" y2="405" stroke="#bdbdbd" stroke-width="1" stroke-dasharray="1 2"/>
<line x1="369.5" y1="111" x2="369.5" y2="405" stroke="#bdbdbd" stroke-width="1" stroke-dasharray="1 2"/>
<rect x="50" y="116" width="1" height="285.5" fill="#000" />
<rect x="56.2" y="411" width="359.6" height="1" fill="#000" />
<rect x="101" y="411" width="1" height="7.5" fill="#000" />
<rect x="168" y="411" width="1" height="7.5" fill="#000" />
<rect x="235" y="411" width="1" height="7.5" fill="#000" />
<rect x="302" y="411" width="1" height="7.5" fill="#000" />
<rect x="369" y="411" width="1" height="7.5" fill="#000" />
<rect x="60" y="411" width="1" height="4" fill="#222" />
<rect x="74" y="411" width="1" height="4" fill="#222" />
<rect x="87" y="411" width="1" height="4" fill="#222" />
<rect x="114" y="411" width="1" height="4" fill="#222" />
<rect x="128" y="411" width="1" height="4" fill="#222" />
<rect x="141" y="411" width="1" height="4" fill="#222" />
<rect x="154" y="411" width="1" height="4" fill="#222" />
<rect x="181" y="411" width="1" height="4" fill="#222" />
<rect x="195" y="411" width="1" height="4" fill="#222" />
<rect x="208" y="411" width="1" height="4" fill="#222" />
<rect x="222" y="411" width="1" height="4" fill="#222" />
<rect x="248" y="411" width="1" height="4" fill="#222" />
<rect x="262" y="411" width="1" height="4" fill="#222" />
<rect x="275" y="411" width="1" height="4" fill="#222" />
<rect x="289" y="411" width="1" height="4" fill="#222" />
<rect x="316" y="411" width="1" height="4" fill="#222" />
<rect x="329" y="411" width="1" height="4" fill="#222" />
<rect x="342" y="411" width="1" height="4" fill="#222" />
<rect x="356" y="411" width="1" height="4" fill="#222" />
<rect x="383" y="411" width="1" height="4" fill="#222" />
<rect x="396" y="411" width="1" height="4" fill="#222" />
<rect x="409" y="411" width="1" height="4" fill="#222" />
<rect x="45" y="374" width="5.5" height="1" fill="#000" />
<rect x="45" y="328" width="5.5" height="1" fill="#000" />
<rect x="45" y="283" width="5.5" height="1" fill="#000" />
<rect x="45" y="237" width="5.5" height="1" fill="#000" />
<rect x="45" y="192" width="5.5" height="1" fill="#000" />
<rect x="45" y="147" width="5.5" height="1" fill="#000" />
<rect x="47.5" y="392" width="3" height="1" fill="#222" />
<rect x="47.5" y="383" width="3" height="1" fill="#222" />
<rect x="47.5" y="365" width="3" height="1" fill="#222" />
<rect x="47.5" y="356" width="3" height="1" fill="#222" />
<rect x="47.5" y="346" width="3" height="1" fill="#222" />
<rect x="47.5" y="337" width="3" height="1" fill="#222" />
<rect x="47.5" y="319" width="3" height="1" fill="#222" />
<rect x="47.5" y="310" width="3" height="1" fill="#222" />
<rect x="47.5" y="301" width="3" height="1" fill="#222" />
<rect x="47.5" y="292" width="3" height="1" fill="#222" />
<rect x="47.5" y="274" width="3" height="1" fill="#222" />
<rect x="47.5" y="264" width="3" height="1" fill="#222" />
<rect x="47.5" y="255" width="3" height="1" fill="#222" />
<rect x="47.5" y="246" width="3" height="1" fill="#222" />
<rect x="47.5" y="228" width="3" height="1" fill="#222" />
<rect x="47.5" y="219" width="3" height="1" fill="#222" />
<rect x="47.5" y="210" width="3" height="1" fill="#222" />
<rect x="47.5" y="201" width="3" height="1" fill="#222" />
<rect x="47.5" y="183" width="3" height="1" fill="#222" />
<rect x="47.5" y="174" width="3" height="1" fill="#222" />
<rect x="47.5" y="165" width="3" height="1" fill="#222" />
<rect x="47.5" y="156" width="3" height="1" fill="#222" />
<rect x="47.5" y="138" width="3" height="1" fill="#222" />
<rect x="47.5" y="129" width="3" height="1" fill="#222" />
<rect x="47.5" y="120" width="3" height="1" fill="#222" />
<text x="42.8" y="378.7" font-size="12" text-anchor="end" textLength="9.3" lengthAdjust="spacingAndGlyphs">50</text>
<text x="42.8" y="332.8" font-size="12" text-anchor="end" textLength="14.0" lengthAdjust="spacingAndGlyphs">100</text>
<text x="42.8" y="287.6" font-size="12" text-anchor="end" textLength="14.0" lengthAdjust="spacingAndGlyphs">150</text>
<text x="42.8" y="241.7" font-size="12" text-anchor="end" textLength="14.0" lengthAdjust="spacingAndGlyphs">200</text>
<text x="42.8" y="197.2" font-size="12" text-anchor="end" textLength="14.0" lengthAdjust="spacingAndGlyphs">250</text>
<text x="42.8" y="151.7" font-size="12" text-anchor="end" textLength="14.0" lengthAdjust="spacingAndGlyphs">300</text>
<text x="101.1" y="434.6" font-size="12" text-anchor="middle" textLength="8.6" lengthAdjust="spacingAndGlyphs">10</text>
<text x="168.4" y="434.6" font-size="12" text-anchor="middle" textLength="8.6" lengthAdjust="spacingAndGlyphs">20</text>
<text x="235.4" y="434.6" font-size="12" text-anchor="middle" textLength="8.6" lengthAdjust="spacingAndGlyphs">30</text>
<text x="302.6" y="434.6" font-size="12" text-anchor="middle" textLength="8.6" lengthAdjust="spacingAndGlyphs">40</text>
<text x="369.6" y="434.6" font-size="12" text-anchor="middle" textLength="8.6" lengthAdjust="spacingAndGlyphs">50</text>
<text transform="translate(23,259.8) rotate(-90)" x="0" y="4.4" font-size="12.2" text-anchor="middle" textLength="66.5" lengthAdjust="spacingAndGlyphs" stroke="#000" stroke-width="0.18">N [имп]</text>
<text x="220.4" y="454.4" font-size="16.5" textLength="30.0" lengthAdjust="spacingAndGlyphs">2θ [°]</text>
<text x="298.0" y="153.3" font-size="10.5" textLength="37.0" lengthAdjust="spacingAndGlyphs">39.018; 285</text>
<polyline points="56.2,252.7 56.3,255.7 56.5,259.0 56.6,261.7 56.8,265.0 56.9,267.9 57.2,271.2 57.4,275.3 57.7,277.0 58.4,276.7 59.0,273.1 59.6,272.8 60.2,273.8 60.8,275.1 61.3,271.5 61.8,271.4 62.3,272.6 62.8,273.5 63.3,271.4 63.8,270.2 64.2,272.3 64.7,267.8 65.2,270.0 65.6,266.1 66.1,264.0 66.5,262.5 67.0,262.0 67.5,262.0 67.9,257.1 68.4,256.7 68.8,254.8 69.3,251.4 69.8,249.1 70.3,243.9 70.8,240.8 71.3,239.4 71.6,236.2 71.8,232.5 72.1,228.9 72.3,225.6 72.6,222.0 72.8,218.8 72.9,215.9 73.1,212.7 73.3,209.4 73.5,206.4 73.7,203.3 73.8,200.3 74.0,197.0 74.1,193.9 74.1,190.9 74.2,187.7 74.3,184.6 74.3,181.6 74.4,178.4 74.4,175.4 74.5,172.2 74.6,169.2 74.6,166.1 74.7,163.0 74.9,160.2 75.1,156.9 75.2,154.1 75.4,151.0 75.6,148.1 76.3,141.9 77.0,146.6 77.5,149.4 78.0,151.1 78.6,155.8 79.1,154.5 79.7,159.1 80.2,160.4 81.0,158.3 81.7,155.0 82.1,157.2 82.4,160.8 82.8,165.2 83.3,162.2 83.8,164.2 84.3,162.9 84.8,162.6 85.3,164.9 85.7,170.6 86.2,170.1 86.6,173.2 87.1,176.3 87.6,180.9 88.0,179.8 88.5,183.9 88.9,186.8 89.4,190.8 89.9,192.0 90.4,193.8 90.8,192.7 91.3,194.9 91.8,196.3 92.3,200.6 92.8,202.9 93.3,201.1 93.8,204.3 94.0,207.4 94.2,210.5 94.5,213.8 94.7,217.0 94.9,220.0 95.0,223.2 95.0,226.7 95.1,230.0 95.2,233.3 95.2,236.7 95.3,240.0 95.4,243.6 95.4,247.2 95.5,250.8 95.5,254.4 95.6,258.2 95.8,261.5 96.1,264.9 96.3,268.2 96.5,271.3 96.7,274.7 97.0,277.9 97.2,281.5 97.5,284.0 97.9,287.1 98.2,290.4 98.5,293.4 98.9,296.7 99.2,298.9 99.7,301.9 100.2,305.3 100.8,308.3 101.3,312.0 101.8,314.3 102.3,317.6 102.8,318.2 103.3,318.4 103.9,319.9 104.4,321.4 104.9,322.7 105.4,322.6 105.9,324.9 106.5,325.8 107.0,325.1 107.5,325.7 108.0,325.3 108.5,324.7 108.9,324.6 109.4,323.8 109.8,324.4 110.3,322.2 110.8,320.0 111.2,320.3 111.7,317.4 112.2,315.2 112.4,312.3 112.7,309.0 112.9,306.2 113.2,303.4 113.4,300.1 113.6,297.0 113.8,293.7 114.0,290.6 114.1,287.5 114.3,284.6 114.5,281.4 114.6,278.1 114.7,274.7 114.8,271.3 115.0,268.1 115.1,264.8 115.2,261.4 115.3,258.0 115.4,254.4 115.5,250.8 115.5,247.2 115.6,243.6 115.7,240.0 115.8,236.8 115.9,233.7 116.0,230.6 116.1,227.5 116.1,224.5 116.2,221.4 116.3,218.2 116.4,215.2 116.5,212.1 116.7,208.6 116.8,205.0 117.0,201.4 117.1,197.9 117.3,194.4 117.4,197.9 117.6,201.5 117.7,205.1 117.9,208.6 118.0,212.0 118.1,215.1 118.1,218.3 118.2,221.3 118.2,224.5 118.3,227.6 118.3,230.7 118.4,233.8 118.4,236.9 118.5,240.0 118.5,243.1 118.6,246.1 118.6,249.2 118.6,252.3 118.6,255.3 118.7,258.4 118.7,261.5 118.7,264.5 118.7,267.6 118.8,270.6 118.8,273.6 118.9,276.9 119.0,279.9 119.1,282.9 119.2,286.1 119.3,289.2 119.5,292.3 119.6,295.3 119.7,298.4 119.8,301.4 119.9,304.4 120.1,308.2 120.3,311.5 120.5,314.9 120.6,318.4 120.8,321.6 121.0,325.2 121.2,329.3 121.7,331.2 122.2,334.6 122.7,338.1 123.2,338.9 123.7,340.6 124.2,340.7 124.8,342.0 125.3,342.2 125.8,345.0 126.3,342.7 126.7,342.0 127.2,341.4 127.6,341.2 128.1,339.1 128.6,338.3 129.2,335.2 129.6,338.5 130.1,341.8 130.6,342.5 131.1,345.4 131.5,346.7 132.0,348.2 132.5,350.8 133.0,349.9 133.6,351.3 134.1,352.5 134.6,352.8 135.1,352.9 135.6,353.6 136.0,354.0 136.5,354.8 136.9,353.4 137.4,354.7 137.9,354.3 138.3,354.6 138.8,356.0 139.2,355.7 139.7,356.0 140.2,356.4 140.6,356.7 141.1,355.4 141.6,355.7 142.1,355.4 142.5,355.3 143.0,355.6 143.5,354.9 143.9,355.0 144.4,354.7 144.9,355.3 145.3,354.1 145.8,354.0 146.3,353.6 146.8,351.3 147.2,351.5 147.7,351.8 148.2,351.0 148.7,347.6 149.1,345.9 149.6,345.0 150.0,342.4 150.5,341.3 150.9,337.8 151.3,335.4 151.7,332.2 152.1,328.8 152.4,324.9 152.6,322.0 152.9,318.9 153.4,316.1 153.9,316.3 154.6,319.6 155.2,320.9 155.7,324.5 156.1,325.1 156.6,327.1 157.0,330.2 157.5,331.7 158.3,330.0 158.9,333.2 159.5,336.0 160.1,338.3 160.5,341.1 160.9,344.4 161.3,348.2 161.7,349.7 162.2,352.3 162.6,353.4 163.1,353.6 163.6,355.7 164.0,357.7 164.5,358.7 165.0,358.2 165.4,361.0 165.9,361.1 166.4,362.1 166.9,360.6 167.4,361.6 167.8,361.6 168.3,364.0 168.8,363.1 169.3,363.0 169.9,364.1 170.4,365.6 170.9,365.6 171.4,364.6 171.9,363.5 172.5,364.4 173.0,362.7 173.4,361.1 173.9,357.7 174.4,359.5 175.0,363.0 175.5,362.6 176.0,362.0 176.5,364.4 176.9,364.0 177.4,364.7 177.9,363.2 178.4,365.4 178.9,363.6 179.4,365.7 179.8,364.8 180.3,364.7 180.8,365.4 181.3,366.4 181.7,365.0 182.2,364.8 182.7,365.9 183.2,365.3 183.6,365.2 184.1,365.4 184.6,365.3 185.0,365.6 185.5,365.7 185.9,365.6 186.4,366.6 186.8,365.4 187.3,365.8 187.8,364.9 188.2,365.2 188.7,364.3 189.1,364.8 189.6,364.1 190.0,365.8 190.5,364.7 191.0,363.3 191.5,363.3 192.0,363.8 192.5,361.3 193.0,362.4 193.5,360.8 194.1,359.1 194.6,358.0 195.1,355.0 195.7,353.3 196.1,350.3 196.5,347.4 196.9,343.2 197.3,340.3 197.6,336.7 197.9,333.1 198.2,329.5 198.5,326.0 198.6,322.8 198.7,319.8 198.8,316.7 199.0,313.8 199.1,310.7 199.2,307.6 199.3,304.6 199.4,301.4 199.4,298.2 199.5,294.9 199.5,291.7 199.6,288.5 199.7,285.2 199.7,282.0 199.8,278.8 199.8,275.6 199.9,272.3 199.9,269.2 200.0,266.0 200.1,262.8 200.2,259.7 200.3,256.7 200.4,253.5 200.4,250.4 200.5,247.2 200.6,244.2 200.7,241.1 200.8,238.0 200.9,235.0 200.9,232.0 201.0,228.9 201.1,226.0 201.2,222.9 201.2,220.0 201.3,216.9 201.4,213.5 201.5,210.2 201.7,206.7 201.8,203.4 201.9,200.0 202.0,203.5 202.1,206.8 202.3,210.2 202.4,213.7 202.5,217.0 202.6,220.0 202.6,223.0 202.7,226.0 202.7,229.0 202.8,232.0 202.8,235.0 202.9,238.0 202.9,241.1 202.9,244.2 203.0,247.3 203.0,250.4 203.0,253.5 203.0,256.6 203.1,259.7 203.1,262.8 203.1,265.9 203.2,269.0 203.3,272.1 203.3,275.3 203.4,278.3 203.5,281.4 203.6,284.5 203.7,287.5 203.7,290.6 203.8,293.8 203.9,296.6 204.2,300.6 204.5,303.7 204.9,307.2 205.2,310.6 205.5,314.3 206.0,316.0 206.4,316.9 206.9,320.9 207.3,322.9 207.8,324.4 208.4,322.5 209.0,320.8 209.6,318.1 209.9,315.3 210.2,311.5 210.6,307.9 210.9,304.7 211.2,301.6 211.3,298.1 211.5,294.9 211.6,291.6 211.8,288.1 211.9,284.7 212.1,281.4 212.2,278.1 212.3,274.8 212.4,271.5 212.4,268.2 212.5,264.8 212.6,261.5 212.7,258.1 212.8,255.3 213.0,252.1 213.2,249.1 213.3,245.9 213.5,249.0 213.7,252.1 213.8,255.2 214.0,258.2 214.1,261.5 214.2,264.8 214.3,268.1 214.4,271.5 214.5,274.8 214.6,278.0 214.7,281.5 214.9,284.6 215.1,288.3 215.2,291.6 215.4,294.6 215.6,298.1 215.8,301.8 216.1,305.1 216.4,307.6 216.8,310.6 217.1,313.5 217.4,318.3 217.9,319.2 218.4,323.4 218.9,325.2 219.4,329.4 219.8,333.7 220.1,335.9 220.6,339.8 221.1,340.6 221.6,343.6 222.2,344.8 222.7,345.2 223.2,349.0 223.7,349.2 224.2,349.2 224.8,350.6 225.3,353.4 225.8,354.7 226.3,355.7 226.8,356.1 227.3,357.6 227.8,358.4 228.2,360.8 228.7,359.2 229.2,362.3 229.7,363.4 230.2,362.2 230.7,365.1 231.1,364.9 231.6,366.0 232.0,364.7 232.5,365.4 233.0,366.0 233.4,368.3 233.9,367.6 234.3,367.4 234.8,368.1 235.3,368.0 235.8,367.6 236.4,368.1 236.9,370.6 237.4,369.3 237.9,371.6 238.4,369.3 238.9,369.1 239.4,369.5 240.0,368.3 240.5,368.6 241.0,370.1 241.5,369.0 242.1,367.9 242.6,366.5 243.1,367.3 243.6,367.4 244.1,366.2 244.6,368.4 245.1,368.0 245.6,371.7 246.1,372.5 246.6,374.1 247.0,374.6 247.4,374.3 247.9,374.3 248.4,377.7 248.8,376.1 249.3,377.4 249.8,377.3 250.3,377.5 250.8,379.1 251.3,380.1 251.8,378.3 252.3,379.8 252.8,379.0 253.3,379.9 253.7,379.6 254.2,379.1 254.7,379.2 255.2,379.5 255.6,381.7 256.1,380.6 256.6,380.0 257.0,382.2 257.5,382.6 258.0,381.1 258.4,380.4 258.9,380.8 259.3,380.7 259.8,381.6 260.3,381.1 260.7,381.7 261.2,382.0 261.6,383.1 262.1,384.3 262.6,383.9 263.0,382.9 263.5,382.9 263.9,383.3 264.4,382.9 264.9,382.8 265.3,382.0 265.8,382.7 266.2,384.8 266.7,382.3 267.1,383.5 267.6,383.9 268.1,384.6 268.5,382.7 269.0,382.9 269.4,382.9 269.9,383.4 270.4,383.5 270.8,385.0 271.3,384.6 271.8,384.6 272.2,382.0 272.7,382.0 273.2,384.0 273.7,384.5 274.1,383.2 274.6,383.5 275.1,381.7 275.5,382.8 276.0,384.4 276.5,385.2 277.1,386.4 277.6,387.9 278.1,385.5 278.6,384.8 279.1,384.7 279.6,386.3 280.1,387.3 280.5,388.6 281.0,388.5 281.5,388.8 282.0,388.9 282.5,387.7 283.1,387.8 283.6,386.0 284.1,387.9 284.6,386.0 285.1,386.4 285.6,384.0 286.1,381.3 286.7,377.8 287.3,375.3 287.9,379.4 288.4,382.5 288.9,382.5 289.5,384.2 290.0,387.4 290.5,387.9 290.9,387.7 291.4,387.6 291.9,389.2 292.4,387.8 292.9,389.0 293.3,389.9 293.8,391.8 294.3,390.8 294.7,391.6 295.2,390.3 295.7,389.6 296.1,389.6 296.6,391.8 297.1,391.0 297.6,389.8 298.0,389.0 298.5,390.4 299.0,391.2 299.4,390.7 299.9,390.4 300.4,391.9 300.9,392.9 301.4,391.1 301.8,390.8 302.3,391.9 302.8,391.8 303.2,392.1 303.7,390.3 304.2,391.7 304.7,391.8 305.1,391.3 305.6,390.7 306.1,393.3 306.5,391.6 307.0,393.4 307.5,391.6 307.9,391.6 308.4,393.2 308.9,391.8 309.3,393.8 309.8,392.5 310.3,391.6 310.7,391.7 311.2,392.3 311.6,393.0 312.1,393.9 312.6,391.5 313.0,392.3 313.5,391.7 314.0,394.0 314.4,391.6 314.9,391.3 315.4,391.4 315.8,392.4 316.3,393.9 316.8,393.5 317.3,392.6 317.9,393.1 318.4,392.5 318.9,390.3 319.4,390.3 319.9,392.9 320.4,392.7 320.9,391.0 321.4,392.9 321.9,392.1 322.4,392.2 323.0,392.1 323.5,391.7 324.0,391.2 324.5,391.8 324.9,391.9 325.4,393.5 325.8,390.8 326.3,393.1 326.8,390.7 327.2,390.9 327.7,392.1 328.1,392.0 328.6,390.6 329.1,389.0 329.6,389.8 330.1,389.1 330.6,390.3 331.0,387.7 331.5,387.8 332.0,388.9 332.5,385.9 333.0,386.2 333.5,386.7 334.1,385.8 334.6,382.8 335.1,382.0 335.6,381.3 336.1,382.1 336.6,378.4 337.1,378.2 337.6,376.9 338.1,372.8 338.5,370.1 339.0,369.7 339.6,372.4 340.2,375.0 340.7,379.2 341.3,380.8 341.8,383.5 342.3,384.0 342.7,387.4 343.2,389.2 343.6,389.6 344.1,391.7 344.6,389.3 345.0,390.3 345.5,391.4 345.9,393.2 346.4,393.5 346.9,392.2 347.3,392.1 347.8,393.0 348.2,393.5 348.7,395.2 349.2,393.1 349.7,395.1 350.1,395.1 350.6,395.5 351.1,395.4 351.6,395.1 352.0,394.4 352.5,394.5 353.0,394.8 353.5,396.2 353.9,394.2 354.4,394.7 354.9,396.6 355.4,395.2 355.9,394.7 356.3,394.7 356.8,396.4 357.3,395.9 357.8,397.9 358.2,397.8 358.7,398.2 359.2,396.1 359.7,395.7 360.1,395.9 360.6,397.2 361.1,397.9 361.6,397.1 362.0,396.5 362.5,397.1 362.9,397.7 363.4,397.8 363.8,398.0 364.3,398.3 364.7,397.8 365.2,396.2 365.6,398.3 366.1,396.7 366.5,397.5 367.0,396.9 367.4,398.0 367.9,396.4 368.3,396.5 368.8,396.5 369.3,395.1 369.9,396.2 370.4,394.1 370.9,394.0 371.3,394.8 371.8,397.2 372.2,396.4 372.7,396.2 373.2,397.4 373.6,396.3 374.1,396.8 374.5,393.6 375.0,394.1 375.5,395.0 376.0,394.9 376.4,395.0 376.9,392.3 377.4,392.9 377.9,393.6 378.4,395.1 378.9,398.7 379.4,397.8 379.9,399.2 380.4,397.8 380.9,399.6 381.3,398.6 381.8,398.4 382.3,400.2 382.8,401.0 383.3,398.5 383.7,400.0 384.2,400.1 384.6,398.9 385.1,399.4 385.6,398.7 386.0,399.0 386.5,399.1 386.9,400.2 387.4,400.4 387.9,399.0 388.3,398.5 388.8,399.4 389.2,400.5 389.7,399.1 390.2,399.5 390.6,399.2 391.1,400.9 391.5,400.2 392.0,398.8 392.5,398.9 392.9,399.7 393.4,400.2 393.9,400.4 394.3,398.8 394.8,399.0 395.3,400.5 395.7,399.7 396.2,399.3 396.6,399.3 397.1,401.2 397.6,399.3 398.0,400.0 398.5,399.4 399.0,399.5 399.4,400.9 399.9,401.2 400.4,399.3 400.8,398.8 401.3,400.4 402.0,397.5 402.6,395.5 403.1,399.1 403.6,398.6 404.1,400.7 404.6,399.5 405.0,401.0 405.5,399.9 405.9,399.1 406.4,398.7 406.8,400.4 407.3,400.8 407.7,401.7 408.2,399.3 408.6,401.0 409.1,400.3 409.6,400.7 410.0,399.6 410.5,400.0 410.9,400.8 411.4,402.0 411.9,399.5 412.3,400.7 412.8,401.6 413.2,402.1 413.7,399.8 414.2,399.6 414.6,402.0 415.1,402.1 415.5,400.6 416.0,400.7" fill="none" stroke="#0000ff" stroke-width="0.9" stroke-linejoin="round" stroke-opacity="1"/>
<rect x="419" y="109" width="399" height="354" fill="#6a6565" />
<rect x="421" y="111" width="395" height="350" fill="#f0f0f0" />
<rect x="423.5" y="111" width="389" height="346" fill="#ffffff" />
<line x1="473" y1="338.5" x2="810.5" y2="338.5" stroke="#b4b4b4" stroke-width="1" stroke-dasharray="1 1"/>
<line x1="473" y1="275.5" x2="810.5" y2="275.5" stroke="#b4b4b4" stroke-width="1" stroke-dasharray="1 1"/>
<line x1="473" y1="211.5" x2="810.5" y2="211.5" stroke="#b4b4b4" stroke-width="1" stroke-dasharray="1 1"/>
<line x1="473" y1="148.5" x2="810.5" y2="148.5" stroke="#b4b4b4" stroke-width="1" stroke-dasharray="1 1"/>
<line x1="508.5" y1="115" x2="508.5" y2="405" stroke="#bdbdbd" stroke-width="1" stroke-dasharray="1 2"/>
<line x1="572.5" y1="115" x2="572.5" y2="405" stroke="#bdbdbd" stroke-width="1" stroke-dasharray="1 2"/>
<line x1="635.5" y1="115" x2="635.5" y2="405" stroke="#bdbdbd" stroke-width="1" stroke-dasharray="1 2"/>
<line x1="699.5" y1="115" x2="699.5" y2="405" stroke="#bdbdbd" stroke-width="1" stroke-dasharray="1 2"/>
<line x1="763.5" y1="115" x2="763.5" y2="405" stroke="#bdbdbd" stroke-width="1" stroke-dasharray="1 2"/>
<rect x="471" y="119.6" width="1" height="282" fill="#000" />
<rect x="477.2" y="411" width="330.8" height="1" fill="#000" />
<rect x="508" y="411" width="1" height="7.5" fill="#000" />
<rect x="572" y="411" width="1" height="7.5" fill="#000" />
<rect x="635" y="411" width="1" height="7.5" fill="#000" />
<rect x="699" y="411" width="1" height="7.5" fill="#000" />
<rect x="763" y="411" width="1" height="7.5" fill="#000" />
<rect x="482" y="411" width="1" height="4" fill="#222" />
<rect x="495" y="411" width="1" height="4" fill="#222" />
<rect x="521" y="411" width="1" height="4" fill="#222" />
<rect x="534" y="411" width="1" height="4" fill="#222" />
<rect x="547" y="411" width="1" height="4" fill="#222" />
<rect x="559" y="411" width="1" height="4" fill="#222" />
<rect x="585" y="411" width="1" height="4" fill="#222" />
<rect x="597" y="411" width="1" height="4" fill="#222" />
<rect x="610" y="411" width="1" height="4" fill="#222" />
<rect x="623" y="411" width="1" height="4" fill="#222" />
<rect x="648" y="411" width="1" height="4" fill="#222" />
<rect x="661" y="411" width="1" height="4" fill="#222" />
<rect x="673" y="411" width="1" height="4" fill="#222" />
<rect x="686" y="411" width="1" height="4" fill="#222" />
<rect x="712" y="411" width="1" height="4" fill="#222" />
<rect x="724" y="411" width="1" height="4" fill="#222" />
<rect x="737" y="411" width="1" height="4" fill="#222" />
<rect x="750" y="411" width="1" height="4" fill="#222" />
<rect x="775" y="411" width="1" height="4" fill="#222" />
<rect x="788" y="411" width="1" height="4" fill="#222" />
<rect x="801" y="411" width="1" height="4" fill="#222" />
<rect x="466" y="338" width="5.5" height="1" fill="#000" />
<rect x="466" y="275" width="5.5" height="1" fill="#000" />
<rect x="466" y="211" width="5.5" height="1" fill="#000" />
<rect x="466" y="148" width="5.5" height="1" fill="#000" />
<rect x="468.5" y="388" width="3" height="1" fill="#222" />
<rect x="468.5" y="376" width="3" height="1" fill="#222" />
<rect x="468.5" y="363" width="3" height="1" fill="#222" />
<rect x="468.5" y="351" width="3" height="1" fill="#222" />
<rect x="468.5" y="325" width="3" height="1" fill="#222" />
<rect x="468.5" y="313" width="3" height="1" fill="#222" />
<rect x="468.5" y="300" width="3" height="1" fill="#222" />
<rect x="468.5" y="287" width="3" height="1" fill="#222" />
<rect x="468.5" y="262" width="3" height="1" fill="#222" />
<rect x="468.5" y="249" width="3" height="1" fill="#222" />
<rect x="468.5" y="237" width="3" height="1" fill="#222" />
<rect x="468.5" y="224" width="3" height="1" fill="#222" />
<rect x="468.5" y="198" width="3" height="1" fill="#222" />
<rect x="468.5" y="186" width="3" height="1" fill="#222" />
<rect x="468.5" y="173" width="3" height="1" fill="#222" />
<rect x="468.5" y="161" width="3" height="1" fill="#222" />
<rect x="468.5" y="135" width="3" height="1" fill="#222" />
<rect x="468.5" y="123" width="3" height="1" fill="#222" />
<text x="463.2" y="342.7" font-size="12" text-anchor="end" textLength="27.0" lengthAdjust="spacingAndGlyphs">100 000</text>
<text x="463.2" y="279.6" font-size="12" text-anchor="end" textLength="27.0" lengthAdjust="spacingAndGlyphs">200 000</text>
<text x="463.2" y="215.8" font-size="12" text-anchor="end" textLength="27.0" lengthAdjust="spacingAndGlyphs">300 000</text>
<text x="463.2" y="152.8" font-size="12" text-anchor="end" textLength="27.0" lengthAdjust="spacingAndGlyphs">400 000</text>
<text x="508.6" y="434.3" font-size="12" text-anchor="middle" textLength="8.6" lengthAdjust="spacingAndGlyphs">10</text>
<text x="572.7" y="434.3" font-size="12" text-anchor="middle" textLength="8.6" lengthAdjust="spacingAndGlyphs">20</text>
<text x="635.9" y="434.3" font-size="12" text-anchor="middle" textLength="8.6" lengthAdjust="spacingAndGlyphs">30</text>
<text x="699.3" y="434.3" font-size="12" text-anchor="middle" textLength="8.6" lengthAdjust="spacingAndGlyphs">40</text>
<text x="763.0" y="434.3" font-size="12" text-anchor="middle" textLength="8.6" lengthAdjust="spacingAndGlyphs">50</text>
<text transform="translate(430.2,261.5) rotate(-90)" x="0" y="4.4" font-size="12.2" text-anchor="middle" textLength="65.5" lengthAdjust="spacingAndGlyphs" stroke="#000" stroke-width="0.18">N [имп]</text>
<text x="627.7" y="453.9" font-size="16.5" textLength="29.3" lengthAdjust="spacingAndGlyphs">2θ [°]</text>
<polyline points="477.2,401.2 487.7,401.0 490.0,400.8 491.4,400.2 492.2,398.5 492.8,392.7 493.2,376.2 493.5,364.2 493.8,376.2 494.2,392.7 494.8,398.5 495.6,400.2 497.0,400.8 499.3,401.0 534.6,401.0 537.2,400.4 538.9,398.8 539.9,394.2 540.5,378.4 541.0,334.1 541.4,301.5 541.8,334.1 542.3,378.4 542.9,394.2 543.9,398.8 545.6,400.4 548.2,401.0 581.3,401.0 584.5,399.7 586.6,396.3 587.8,386.7 588.6,353.6 589.1,260.6 589.6,192.3 590.1,260.6 590.6,353.6 591.4,386.7 592.6,396.3 594.7,399.7 597.9,401.0 633.9,401.0 635.6,401.0 636.6,400.8 637.2,400.5 637.7,399.3 638.0,396.0 638.2,393.6 638.4,396.0 638.7,399.3 639.2,400.5 639.8,400.8 640.8,401.0 642.5,401.0 649.4,401.0 651.8,400.6 653.3,399.7 654.1,397.0 654.7,387.7 655.2,361.6 655.5,342.5 655.8,361.6 656.3,387.7 656.9,397.0 657.7,399.7 659.2,400.6 661.6,401.0 678.6,401.0 682.3,399.2 684.6,394.9 685.9,382.2 686.8,339.0 687.5,217.2 688.0,127.8 688.5,217.2 689.2,339.0 690.1,382.2 691.4,394.9 693.7,399.2 697.4,401.0 701.9,401.0 703.3,401.0 704.2,401.0 704.7,400.9 705.0,400.6 705.3,399.9 705.5,399.3 705.7,399.9 706.0,400.6 706.3,400.9 706.8,401.0 707.7,401.0 709.1,401.0 711.1,401.0 713.6,401.0 715.3,400.9 716.2,400.6 716.8,399.6 717.2,397.0 717.6,395.0 718.0,397.0 718.4,399.6 719.0,400.6 719.9,400.9 721.6,401.0 724.1,401.0 729.6,401.0 733.3,399.5 735.6,395.9 736.9,385.5 737.8,349.8 738.5,249.2 739.0,175.3 739.5,249.2 740.2,349.8 741.1,385.5 742.4,395.9 744.7,399.5 748.4,401.0 770.0,401.6 780.0,401.2 784.1,401.0 786.9,400.7 788.7,399.9 789.7,397.6 790.4,389.8 790.9,367.9 791.3,351.8 791.7,367.9 792.2,389.8 792.9,397.6 793.9,399.9 795.7,400.7 798.5,401.0 811.4,402.0" fill="none" stroke="#1414ff" stroke-width="0.9" stroke-linejoin="round" stroke-opacity="1"/>
<rect x="816" y="108" width="486" height="356" fill="#6a6565" />
<rect x="818" y="110" width="481" height="352" fill="#f0f0f0" />
<rect x="824" y="110" width="463" height="348" fill="#ffffff" />
<line x1="878" y1="353.5" x2="1286" y2="353.5" stroke="#b4b4b4" stroke-width="1" stroke-dasharray="1 1"/>
<line x1="878" y1="288.5" x2="1286" y2="288.5" stroke="#b4b4b4" stroke-width="1" stroke-dasharray="1 1"/>
<line x1="878" y1="221.5" x2="1286" y2="221.5" stroke="#b4b4b4" stroke-width="1" stroke-dasharray="1 1"/>
<line x1="878" y1="156.5" x2="1286" y2="156.5" stroke="#b4b4b4" stroke-width="1" stroke-dasharray="1 1"/>
<line x1="882.5" y1="110" x2="882.5" y2="405" stroke="#bdbdbd" stroke-width="1" stroke-dasharray="1 2"/>
<line x1="962.5" y1="110" x2="962.5" y2="405" stroke="#bdbdbd" stroke-width="1" stroke-dasharray="1 2"/>
<line x1="1042.5" y1="110" x2="1042.5" y2="405" stroke="#bdbdbd" stroke-width="1" stroke-dasharray="1 2"/>
<line x1="1122.5" y1="110" x2="1122.5" y2="405" stroke="#bdbdbd" stroke-width="1" stroke-dasharray="1 2"/>
<line x1="1202.5" y1="110" x2="1202.5" y2="405" stroke="#bdbdbd" stroke-width="1" stroke-dasharray="1 2"/>
<rect x="876" y="110" width="1" height="291.3" fill="#000" />
<rect x="882.2" y="411" width="400.2" height="1" fill="#000" />
<rect x="882" y="411" width="1" height="7.5" fill="#000" />
<rect x="962" y="411" width="1" height="7.5" fill="#000" />
<rect x="1042" y="411" width="1" height="7.5" fill="#000" />
<rect x="1122" y="411" width="1" height="7.5" fill="#000" />
<rect x="1202" y="411" width="1" height="7.5" fill="#000" />
<rect x="898" y="411" width="1" height="4" fill="#222" />
<rect x="914" y="411" width="1" height="4" fill="#222" />
<rect x="930" y="411" width="1" height="4" fill="#222" />
<rect x="946" y="411" width="1" height="4" fill="#222" />
<rect x="978" y="411" width="1" height="4" fill="#222" />
<rect x="994" y="411" width="1" height="4" fill="#222" />
<rect x="1010" y="411" width="1" height="4" fill="#222" />
<rect x="1026" y="411" width="1" height="4" fill="#222" />
<rect x="1058" y="411" width="1" height="4" fill="#222" />
<rect x="1074" y="411" width="1" height="4" fill="#222" />
<rect x="1090" y="411" width="1" height="4" fill="#222" />
<rect x="1106" y="411" width="1" height="4" fill="#222" />
<rect x="1138" y="411" width="1" height="4" fill="#222" />
<rect x="1154" y="411" width="1" height="4" fill="#222" />
<rect x="1170" y="411" width="1" height="4" fill="#222" />
<rect x="1186" y="411" width="1" height="4" fill="#222" />
<rect x="1218" y="411" width="1" height="4" fill="#222" />
<rect x="1234" y="411" width="1" height="4" fill="#222" />
<rect x="1250" y="411" width="1" height="4" fill="#222" />
<rect x="1266" y="411" width="1" height="4" fill="#222" />
<rect x="871" y="353" width="5.5" height="1" fill="#000" />
<rect x="871" y="288" width="5.5" height="1" fill="#000" />
<rect x="871" y="221" width="5.5" height="1" fill="#000" />
<rect x="871" y="156" width="5.5" height="1" fill="#000" />
<rect x="873.5" y="392" width="3" height="1" fill="#222" />
<rect x="873.5" y="379" width="3" height="1" fill="#222" />
<rect x="873.5" y="366" width="3" height="1" fill="#222" />
<rect x="873.5" y="340" width="3" height="1" fill="#222" />
<rect x="873.5" y="327" width="3" height="1" fill="#222" />
<rect x="873.5" y="314" width="3" height="1" fill="#222" />
<rect x="873.5" y="301" width="3" height="1" fill="#222" />
<rect x="873.5" y="274" width="3" height="1" fill="#222" />
<rect x="873.5" y="261" width="3" height="1" fill="#222" />
<rect x="873.5" y="247" width="3" height="1" fill="#222" />
<rect x="873.5" y="234" width="3" height="1" fill="#222" />
<rect x="873.5" y="208" width="3" height="1" fill="#222" />
<rect x="873.5" y="195" width="3" height="1" fill="#222" />
<rect x="873.5" y="182" width="3" height="1" fill="#222" />
<rect x="873.5" y="169" width="3" height="1" fill="#222" />
<rect x="873.5" y="143" width="3" height="1" fill="#222" />
<rect x="873.5" y="130" width="3" height="1" fill="#222" />
<rect x="873.5" y="117" width="3" height="1" fill="#222" />
<text x="866.3" y="357.7" font-size="12" text-anchor="end" textLength="22.5" lengthAdjust="spacingAndGlyphs">5 000</text>
<text x="866.3" y="292.3" font-size="12" text-anchor="end" textLength="27.7" lengthAdjust="spacingAndGlyphs">10 000</text>
<text x="866.3" y="225.5" font-size="12" text-anchor="end" textLength="27.7" lengthAdjust="spacingAndGlyphs">15 000</text>
<text x="866.3" y="160.8" font-size="12" text-anchor="end" textLength="27.7" lengthAdjust="spacingAndGlyphs">20 000</text>
<text x="882.9" y="435.0" font-size="12" text-anchor="middle" textLength="9.7" lengthAdjust="spacingAndGlyphs">10</text>
<text x="962.7" y="435.0" font-size="12" text-anchor="middle" textLength="9.7" lengthAdjust="spacingAndGlyphs">20</text>
<text x="1042.7" y="435.0" font-size="12" text-anchor="middle" textLength="9.7" lengthAdjust="spacingAndGlyphs">30</text>
<text x="1122.5" y="435.0" font-size="12" text-anchor="middle" textLength="9.7" lengthAdjust="spacingAndGlyphs">40</text>
<text x="1202.3" y="435.0" font-size="12" text-anchor="middle" textLength="9.7" lengthAdjust="spacingAndGlyphs">50</text>
<text transform="translate(830.8,257) rotate(-90)" x="0" y="4.4" font-size="12.2" text-anchor="middle" textLength="66" lengthAdjust="spacingAndGlyphs" stroke="#000" stroke-width="0.18">N [имп]</text>
<text x="1064.5" y="454.3" font-size="16.5" textLength="33.5" lengthAdjust="spacingAndGlyphs">2θ [°]</text>
<polyline points="882.3,359.3 882.8,361.9 883.2,360.3 883.7,361.9 884.1,361.1 884.6,361.7 885.0,359.7 885.5,361.6 885.9,360.0 886.4,360.5 886.8,361.9 887.3,361.8 887.7,359.9 888.2,360.1 888.6,360.6 889.1,361.0 889.5,360.6 890.0,359.9 890.5,360.3 890.9,361.7 891.4,362.2 891.8,359.7 892.3,361.3 892.7,361.9 893.2,359.7 893.6,362.1 894.1,360.0 894.5,361.4 895.0,361.3 895.5,361.5 895.9,360.6 896.4,361.0 896.8,361.5 897.3,361.0 897.7,361.7 898.2,361.1 898.6,361.1 899.1,359.8 899.5,361.6 900.0,361.3 900.5,360.5 900.9,362.1 901.4,362.1 901.8,361.1 902.3,360.3 902.7,361.1 903.2,360.0 903.6,360.1 904.1,361.0 904.5,359.9 905.0,361.0 905.5,361.2 905.9,359.7 906.4,361.5 906.8,359.8 907.3,361.8 907.7,361.9 908.2,361.1 908.6,359.7 909.1,361.0 909.5,360.6 910.0,362.4 910.5,359.9 910.9,362.1 911.4,362.6 911.8,361.8 912.3,362.1 912.7,360.3 913.2,362.7 913.6,361.3 914.1,362.7 914.5,362.6 915.0,360.4 915.5,362.3 915.9,362.8 916.4,360.2 916.8,361.1 917.3,362.4 917.7,360.6 918.2,362.8 918.6,361.0 919.1,362.7 919.5,360.7 920.0,361.8 920.5,363.1 920.9,361.0 921.4,361.2 921.8,361.9 922.2,361.4 922.7,360.6 923.1,361.0 923.6,361.0 924.1,363.3 924.5,362.6 925.0,363.3 925.4,361.1 925.9,363.0 926.3,361.0 926.8,362.3 927.2,362.6 927.7,358.4 928.1,356.4 928.6,352.0 928.7,349.0 928.7,346.1 928.8,342.9 928.9,340.1 928.9,337.0 929.0,334.0 929.0,331.0 929.1,328.0 929.2,325.1 929.2,322.0 929.3,319.0 929.4,316.0 929.4,313.0 929.5,310.0 929.5,307.0 929.6,303.9 929.6,300.9 929.6,297.8 929.7,294.8 929.7,291.8 929.7,288.7 929.7,285.7 929.8,282.6 929.8,279.5 929.8,276.5 929.9,273.5 929.9,270.4 929.9,267.4 930.0,264.3 930.0,261.3 930.0,258.2 930.0,255.2 930.1,252.2 930.1,249.1 930.1,246.1 930.2,243.0 930.2,240.0 930.2,236.9 930.3,233.9 930.3,230.9 930.4,227.9 930.4,224.8 930.5,221.8 930.5,218.7 930.6,215.7 930.6,212.7 930.7,209.6 930.7,206.6 930.7,209.6 930.8,212.7 930.8,215.7 930.9,218.8 930.9,221.8 931.0,224.8 931.0,227.8 931.1,230.9 931.1,233.9 931.2,236.9 931.2,240.0 931.2,243.0 931.2,246.1 931.3,249.1 931.3,252.2 931.3,255.2 931.3,258.2 931.4,261.3 931.4,264.3 931.4,267.4 931.4,270.4 931.4,273.5 931.5,276.5 931.5,279.6 931.5,282.6 931.5,285.6 931.5,288.7 931.6,291.7 931.6,294.8 931.6,297.8 931.6,300.9 931.7,303.9 931.7,306.9 931.7,310.0 931.8,313.2 931.8,316.5 931.9,319.8 931.9,323.0 932.0,326.2 932.0,329.5 932.0,332.8 932.1,336.0 932.1,339.3 932.2,342.5 932.2,345.7 932.3,348.9 932.4,345.7 932.6,342.5 932.8,339.4 932.9,336.4 933.1,333.2 933.2,330.0 933.2,327.0 933.3,324.0 933.3,321.0 933.4,318.0 933.4,315.0 933.5,312.0 933.5,309.0 933.6,306.0 933.6,303.0 933.7,300.0 933.7,297.0 933.8,294.0 933.8,291.0 933.9,288.0 933.9,285.0 934.0,281.7 934.0,278.4 934.1,275.0 934.2,271.7 934.3,268.3 934.3,265.0 934.4,261.8 934.5,265.0 934.5,268.4 934.6,271.7 934.7,275.1 934.8,278.3 934.8,281.7 934.9,285.0 934.9,288.0 935.0,291.0 935.0,294.0 935.1,297.0 935.1,300.0 935.1,303.0 935.2,306.0 935.2,309.0 935.3,312.0 935.3,315.0 935.3,318.0 935.4,321.0 935.4,324.0 935.5,327.0 935.5,329.9 935.6,333.2 935.6,336.5 935.7,339.9 935.8,343.2 935.9,346.5 935.9,349.7 936.0,352.0 936.4,356.3 936.8,358.8 937.2,363.2 937.7,363.4 938.2,363.8 938.6,361.5 939.1,364.1 939.6,364.4 940.0,364.7 940.5,362.4 941.0,362.9 941.5,362.7 941.9,362.6 942.4,365.1 942.8,365.1 943.3,364.6 943.8,365.3 944.2,364.8 944.7,363.8 945.1,363.3 945.6,363.4 946.0,365.5 946.5,363.9 947.0,364.3 947.4,364.6 947.9,363.4 948.3,364.1 948.8,364.1 949.2,365.4 949.7,364.4 950.2,364.3 950.6,366.2 951.1,364.8 951.5,365.9 952.0,365.2 952.5,363.4 952.9,364.5 953.4,364.5 953.8,365.5 954.3,364.2 954.8,365.2 955.2,364.7 955.7,363.7 956.1,365.6 956.6,363.6 957.0,362.1 957.4,357.5 957.8,354.1 958.2,352.0 958.3,349.0 958.3,345.9 958.4,342.7 958.5,339.7 958.5,336.6 958.6,333.5 958.7,330.4 958.7,327.3 958.8,324.2 958.9,321.2 958.9,318.0 959.0,315.1 959.1,311.8 959.1,308.7 959.2,305.7 959.3,302.5 959.4,299.3 959.4,296.3 959.5,293.1 959.6,290.1 959.6,286.9 959.7,283.8 959.8,286.9 959.8,290.0 959.9,293.1 959.9,296.3 960.0,299.4 960.1,302.5 960.1,305.7 960.2,308.7 960.2,311.8 960.3,315.0 960.4,318.2 960.4,321.4 960.5,324.5 960.6,327.8 960.6,330.9 960.7,334.1 960.7,337.3 960.8,340.5 960.9,343.7 960.9,346.8 961.0,349.9 961.2,353.2 961.4,356.3 961.5,359.9 961.7,363.5 962.2,364.2 962.7,362.9 963.3,364.2 963.8,365.7 964.3,365.5 964.8,363.6 965.2,364.1 965.7,364.8 966.1,362.4 966.6,361.7 967.1,361.5 967.5,362.1 968.0,362.0 968.4,359.4 968.9,358.9 969.4,358.5 969.8,358.0 970.2,357.9 970.7,356.1 971.1,355.9 971.6,354.8 972.0,356.5 972.5,354.5 972.7,350.9 972.9,348.2 973.2,344.4 973.4,341.4 973.6,338.3 973.7,335.0 973.8,331.6 973.9,328.2 974.1,324.9 974.2,321.7 974.3,318.2 974.4,315.0 974.4,312.0 974.5,309.0 974.5,306.0 974.5,303.0 974.6,300.0 974.6,297.0 974.6,294.0 974.7,291.0 974.7,288.0 974.7,285.0 974.8,282.0 974.8,279.0 974.8,276.0 974.8,273.0 974.9,270.0 974.9,267.0 974.9,264.0 975.0,261.0 975.0,258.0 975.0,255.0 975.1,252.0 975.1,249.0 975.1,246.0 975.2,243.0 975.2,240.0 975.2,237.0 975.3,233.9 975.3,230.9 975.3,227.8 975.3,224.8 975.4,221.8 975.4,218.7 975.4,215.7 975.4,212.6 975.5,209.6 975.5,206.5 975.5,203.5 975.5,200.4 975.6,197.4 975.6,194.4 975.6,191.3 975.6,188.3 975.7,185.2 975.7,182.2 975.7,179.1 975.7,176.1 975.8,173.0 975.8,170.0 975.8,167.0 975.9,164.0 975.9,161.0 976.0,158.0 976.0,155.0 976.1,152.0 976.1,149.0 976.2,146.0 976.2,143.0 976.3,140.0 976.3,137.0 976.3,140.0 976.4,143.0 976.4,146.0 976.5,149.0 976.5,152.0 976.6,155.0 976.6,158.0 976.7,161.0 976.7,164.0 976.8,167.0 976.8,170.0 976.8,173.0 976.9,176.1 976.9,179.1 976.9,182.2 976.9,185.2 977.0,188.3 977.0,191.3 977.0,194.3 977.0,197.4 977.1,200.4 977.1,203.5 977.1,206.5 977.1,209.6 977.2,212.6 977.2,215.6 977.2,218.7 977.2,221.7 977.3,224.8 977.3,227.8 977.3,230.9 977.3,233.9 977.4,237.0 977.4,240.0 977.4,243.0 977.5,246.0 977.5,249.0 977.5,252.0 977.6,255.0 977.6,258.0 977.6,261.0 977.7,264.0 977.7,267.0 977.7,270.0 977.8,273.0 977.8,276.0 977.8,279.0 977.8,282.0 977.9,285.0 977.9,288.0 977.9,291.0 978.0,294.0 978.0,297.0 978.0,300.0 978.1,303.0 978.1,306.0 978.1,309.0 978.2,312.0 978.2,315.1 978.4,318.4 978.7,321.5 978.9,325.2 979.1,328.5 979.3,331.3 979.6,335.1 979.8,338.6 980.1,342.0 980.4,345.0 980.7,349.2 981.0,352.6 981.3,354.5 981.8,352.7 982.4,353.8 982.9,350.6 983.0,347.3 983.1,344.1 983.3,340.9 983.4,337.7 983.5,334.7 983.6,331.4 983.8,328.1 983.9,325.2 984.1,328.3 984.2,331.3 984.4,334.8 984.5,337.8 984.7,341.1 984.9,344.3 985.0,347.6 985.2,351.1 985.6,354.3 986.0,356.2 986.3,360.3 986.7,363.1 987.2,364.5 987.6,364.3 988.1,366.4 988.5,366.2 989.0,366.1 989.5,365.2 990.1,364.2 990.6,364.5 991.4,357.8 992.0,362.1 992.6,364.2 993.1,366.0 993.6,366.7 994.2,367.5 994.7,369.2 995.2,367.3 995.7,370.0 996.1,369.0 996.6,369.5 997.1,369.9 997.5,370.6 998.0,369.4 998.5,369.7 999.0,371.5 999.4,369.0 999.9,370.8 1000.4,370.6 1000.9,368.7 1001.5,370.2 1002.0,370.3 1002.5,370.9 1003.0,368.9 1003.6,366.8 1004.2,361.4 1004.4,358.1 1004.5,354.9 1004.7,351.3 1004.8,348.2 1005.0,344.9 1005.1,341.5 1005.3,338.4 1005.5,334.8 1005.6,331.6 1005.8,328.3 1006.0,325.1 1006.2,321.5 1006.3,318.3 1006.5,315.0 1006.6,311.9 1006.8,309.0 1007.0,305.7 1007.1,302.8 1007.2,306.1 1007.3,309.6 1007.5,313.0 1007.6,316.5 1007.7,320.1 1007.8,323.2 1007.9,326.3 1007.9,329.4 1008.0,332.5 1008.1,335.7 1008.2,338.9 1008.2,342.0 1008.3,345.2 1008.4,348.2 1008.5,345.2 1008.6,342.1 1008.7,338.9 1008.8,335.6 1009.0,332.5 1009.1,329.3 1009.2,326.2 1009.3,323.3 1009.4,320.0 1009.4,317.0 1009.5,314.0 1009.5,311.0 1009.6,308.0 1009.6,305.0 1009.6,302.0 1009.7,299.0 1009.7,296.0 1009.8,293.0 1009.8,290.0 1009.8,287.0 1009.9,284.0 1009.9,281.0 1010.0,278.0 1010.0,275.0 1010.0,272.0 1010.1,269.0 1010.1,266.0 1010.2,263.0 1010.2,260.0 1010.2,256.8 1010.3,253.6 1010.4,250.3 1010.4,247.1 1010.5,243.9 1010.5,240.6 1010.5,237.4 1010.6,234.2 1010.6,231.0 1010.7,227.8 1010.8,224.5 1010.8,221.3 1010.9,224.6 1011.1,228.0 1011.2,231.7 1011.4,235.0 1011.5,238.4 1011.6,241.7 1011.7,244.9 1011.8,248.3 1011.9,251.7 1012.0,255.0 1012.0,252.0 1012.1,248.9 1012.1,245.8 1012.1,242.8 1012.2,239.7 1012.2,236.6 1012.2,233.6 1012.3,230.5 1012.3,227.5 1012.3,224.5 1012.4,221.4 1012.4,218.4 1012.4,215.2 1012.5,212.2 1012.5,209.1 1012.5,206.1 1012.6,203.1 1012.6,200.0 1012.6,197.0 1012.7,193.9 1012.7,190.9 1012.8,188.0 1012.8,184.9 1012.9,181.9 1012.9,178.9 1013.0,175.8 1013.0,172.8 1013.0,169.8 1013.1,166.8 1013.1,163.8 1013.2,160.7 1013.2,157.8 1013.3,154.7 1013.3,151.7 1013.3,154.7 1013.4,157.7 1013.4,160.8 1013.4,163.7 1013.5,166.8 1013.5,169.8 1013.6,172.8 1013.6,175.9 1013.6,178.9 1013.7,181.9 1013.7,184.9 1013.8,187.9 1013.8,190.9 1013.8,194.0 1013.9,197.0 1013.9,200.0 1013.9,203.0 1013.9,206.1 1013.9,209.1 1013.9,212.1 1014.0,215.1 1014.0,218.2 1014.0,221.2 1014.0,224.2 1014.0,227.2 1014.0,230.3 1014.0,233.3 1014.0,236.3 1014.0,239.3 1014.0,242.4 1014.1,245.4 1014.1,248.4 1014.1,251.5 1014.1,254.5 1014.1,257.5 1014.1,260.5 1014.1,263.6 1014.1,266.6 1014.1,269.6 1014.2,272.6 1014.2,275.7 1014.2,278.7 1014.2,281.7 1014.2,284.7 1014.2,287.8 1014.2,290.8 1014.2,293.8 1014.2,296.8 1014.2,299.9 1014.3,302.9 1014.3,305.9 1014.3,309.0 1014.3,312.0 1014.3,315.2 1014.5,318.4 1014.7,321.5 1014.9,325.1 1015.2,328.4 1015.4,331.7 1015.6,335.1 1015.8,338.1 1016.0,341.4 1016.2,344.9 1016.3,348.4 1016.5,351.5 1016.7,355.1 1016.9,359.1 1017.3,360.9 1017.6,364.7 1018.0,367.9 1018.4,370.6 1018.9,370.9 1019.5,372.0 1020.0,374.6 1020.5,374.1 1020.9,372.4 1021.4,370.7 1021.8,372.2 1022.3,371.5 1022.8,370.5 1023.2,372.1 1023.7,373.6 1024.1,374.1 1024.6,373.6 1025.0,373.1 1025.5,373.1 1026.0,371.5 1026.4,371.2 1026.8,370.8 1027.3,372.0 1027.8,370.6 1028.2,370.9 1028.7,371.4 1029.2,372.7 1029.8,372.6 1030.3,373.3 1030.8,377.1 1031.3,375.6 1031.8,375.1 1032.3,377.0 1032.8,377.9 1033.2,376.3 1033.7,378.0 1034.2,377.6 1034.7,378.5 1035.2,377.2 1035.7,377.4 1036.1,380.5 1036.6,380.4 1037.1,379.4 1037.6,379.9 1038.0,379.2 1038.5,381.0 1039.0,380.1 1039.5,381.9 1039.9,381.6 1040.4,381.9 1040.9,382.6 1041.4,380.4 1041.8,379.7 1042.3,380.1 1042.7,379.9 1043.2,379.6 1043.7,379.4 1044.1,380.8 1044.6,381.7 1045.0,380.4 1045.5,381.7 1046.0,381.5 1046.4,378.9 1046.9,380.5 1047.3,379.8 1047.8,378.9 1048.4,378.3 1049.1,373.7 1049.2,370.5 1049.3,367.1 1049.4,363.9 1049.6,360.4 1049.7,357.0 1049.8,353.7 1050.0,350.0 1050.1,346.7 1050.3,343.2 1050.4,339.4 1050.6,335.7 1050.8,339.4 1050.9,343.0 1051.1,346.7 1051.2,350.3 1051.4,353.8 1051.6,356.6 1051.7,360.0 1051.9,363.0 1052.0,366.1 1052.2,369.3 1052.3,372.0 1052.5,374.2 1053.0,377.0 1053.4,378.5 1053.9,378.7 1054.3,378.5 1054.8,380.3 1055.3,381.2 1055.8,379.7 1056.3,380.8 1056.9,381.1 1057.4,381.1 1057.9,382.6 1058.5,378.8 1059.1,376.9 1059.2,373.7 1059.3,370.7 1059.3,367.5 1059.4,364.5 1059.5,361.3 1059.6,358.2 1059.7,355.3 1059.7,352.1 1059.8,349.1 1059.9,345.9 1060.0,342.7 1060.0,339.3 1060.1,336.1 1060.1,332.8 1060.2,329.6 1060.2,326.4 1060.3,323.1 1060.3,319.8 1060.4,316.5 1060.4,313.3 1060.5,310.0 1060.6,306.8 1060.6,303.4 1060.7,300.2 1060.7,296.9 1060.8,293.7 1060.8,290.5 1060.9,287.2 1060.9,284.0 1061.0,280.7 1061.1,283.9 1061.1,287.2 1061.2,290.4 1061.2,293.8 1061.3,297.0 1061.3,300.2 1061.4,303.5 1061.4,306.7 1061.5,310.1 1061.6,313.2 1061.7,316.8 1061.8,319.9 1062.0,323.4 1062.1,326.7 1062.2,330.0 1062.3,333.1 1062.3,336.3 1062.4,339.4 1062.4,342.5 1062.5,345.7 1062.6,348.9 1062.6,352.0 1062.7,355.2 1062.7,358.2 1062.8,361.4 1062.9,364.8 1063.0,368.0 1063.0,371.5 1063.1,374.8 1063.2,378.2 1063.3,380.0 1063.8,383.1 1064.3,382.3 1064.8,382.3 1065.3,381.2 1065.8,383.0 1066.2,381.5 1066.7,380.6 1066.8,377.5 1066.9,374.4 1066.9,371.2 1067.0,368.1 1067.1,364.8 1067.2,361.7 1067.3,358.6 1067.4,355.4 1067.4,352.2 1067.5,349.0 1067.6,345.8 1067.7,342.8 1067.8,339.7 1067.9,336.6 1068.0,333.4 1068.0,330.4 1068.1,327.3 1068.2,324.3 1068.3,321.1 1068.4,317.9 1068.6,314.1 1068.8,310.8 1069.0,307.0 1069.2,310.7 1069.3,314.2 1069.5,318.0 1069.6,321.2 1069.6,324.5 1069.7,327.8 1069.8,331.0 1069.9,334.2 1069.9,337.5 1070.0,340.7 1070.1,344.0 1070.2,347.2 1070.2,350.4 1070.3,353.8 1070.4,357.0 1070.5,360.2 1070.7,363.5 1070.8,366.9 1070.9,370.0 1071.0,373.4 1071.2,376.7 1071.3,380.0 1071.8,380.2 1072.3,383.3 1072.8,385.0 1073.3,386.5 1073.8,385.2 1074.3,386.7 1074.8,386.0 1075.4,387.2 1075.9,386.3 1076.4,388.1 1076.9,388.0 1077.3,387.0 1077.8,386.9 1078.2,386.8 1078.7,386.6 1079.1,385.5 1079.6,387.0 1080.1,384.5 1080.6,383.1 1081.0,381.8 1081.5,380.8 1082.0,380.1 1082.2,376.8 1082.3,373.7 1082.5,370.8 1082.7,367.5 1082.8,364.4 1083.0,361.4 1083.0,358.3 1083.1,355.2 1083.1,352.1 1083.2,349.0 1083.2,346.0 1083.3,342.9 1083.3,339.7 1083.4,336.6 1083.4,333.6 1083.5,330.5 1083.5,327.4 1083.6,324.3 1083.6,321.2 1083.7,318.1 1083.7,315.0 1083.7,311.9 1083.8,308.7 1083.8,305.6 1083.8,302.5 1083.9,299.4 1083.9,296.3 1084.0,293.1 1084.0,290.0 1084.0,286.9 1084.1,283.8 1084.1,280.6 1084.2,277.5 1084.2,274.4 1084.2,271.3 1084.3,268.1 1084.3,265.0 1084.3,261.7 1084.4,258.4 1084.5,255.1 1084.5,251.8 1084.5,248.5 1084.6,245.1 1084.7,241.8 1084.7,238.5 1084.8,241.8 1084.8,245.2 1084.8,248.5 1084.9,251.7 1085.0,255.1 1085.0,258.4 1085.0,261.7 1085.1,265.0 1085.1,268.1 1085.1,271.2 1085.2,274.4 1085.2,277.5 1085.2,280.6 1085.2,283.8 1085.3,286.9 1085.3,290.0 1085.3,293.1 1085.3,296.3 1085.4,299.4 1085.4,302.5 1085.4,305.6 1085.5,308.8 1085.5,311.9 1085.5,315.0 1085.6,318.1 1085.6,321.2 1085.7,324.3 1085.7,327.4 1085.8,330.4 1085.9,333.5 1085.9,336.6 1086.0,339.8 1086.0,342.8 1086.1,345.9 1086.2,349.0 1086.2,352.1 1086.3,355.2 1086.4,358.3 1086.5,361.4 1086.5,364.5 1086.6,367.5 1087.2,364.6 1087.7,360.9 1088.1,357.8 1088.5,354.7 1088.9,352.0 1089.2,355.1 1089.5,358.2 1089.7,361.3 1090.0,363.8 1090.6,362.6 1091.2,361.2 1091.8,363.9 1092.3,366.9 1092.8,364.8 1093.4,361.7 1093.9,360.0 1094.1,363.4 1094.3,366.9 1094.6,370.4 1094.8,373.8 1095.2,377.5 1095.5,381.4 1095.9,384.9 1096.4,384.7 1096.9,383.7 1097.4,383.1 1097.6,379.7 1097.8,376.6 1098.0,373.5 1098.1,370.1 1098.3,366.9 1098.5,363.7 1098.7,366.9 1098.9,370.3 1099.1,373.3 1099.3,376.7 1099.5,379.8 1099.7,382.3 1100.2,385.8 1100.8,387.1 1101.3,388.4 1101.8,388.6 1102.2,388.3 1102.7,388.5 1103.2,387.6 1103.4,384.5 1103.5,381.6 1103.7,378.5 1103.9,375.2 1104.1,372.2 1104.2,369.1 1104.4,366.1 1104.6,362.5 1104.8,359.1 1105.0,355.6 1105.2,358.6 1105.3,361.7 1105.5,364.7 1105.6,367.8 1105.8,370.7 1105.9,373.9 1106.1,377.0 1106.3,380.1 1106.6,382.9 1106.8,386.3 1107.0,388.3 1107.6,388.1 1108.1,386.3 1108.7,384.6 1109.2,387.5 1109.8,388.9 1110.3,390.7 1110.9,391.8 1111.5,392.5 1112.1,392.5 1112.6,391.2 1113.0,390.4 1113.5,389.5 1113.9,389.0 1114.4,387.5 1114.8,384.1 1115.2,380.8 1115.6,377.2 1116.0,373.7 1116.3,370.9 1116.5,367.8 1116.8,364.5 1117.1,361.4 1117.3,364.4 1117.6,367.5 1117.8,370.5 1118.1,373.8 1118.3,377.0 1118.8,373.1 1119.4,371.5 1119.9,367.5 1120.2,371.3 1120.5,374.7 1120.8,378.3 1121.1,381.4 1121.3,378.3 1121.5,375.2 1121.7,371.7 1121.9,368.5 1122.1,365.4 1122.3,362.2 1122.5,365.8 1122.6,369.2 1122.8,372.7 1123.0,376.2 1123.1,379.6 1123.3,383.1 1123.8,386.3 1124.3,388.6 1124.8,391.3 1125.3,390.8 1125.8,389.4 1126.3,389.5 1126.8,387.7 1126.9,384.4 1127.1,381.0 1127.2,377.8 1127.3,374.5 1127.5,371.3 1127.6,368.0 1127.8,364.8 1127.9,361.4 1128.0,358.3 1128.0,355.2 1128.1,352.1 1128.1,349.1 1128.2,345.9 1128.3,342.8 1128.3,339.8 1128.4,336.6 1128.4,333.5 1128.5,330.5 1128.6,327.4 1128.6,324.3 1128.7,321.2 1128.7,318.1 1128.8,315.0 1128.8,311.9 1128.9,308.9 1128.9,305.8 1129.0,302.7 1129.0,299.6 1129.0,296.6 1129.1,293.5 1129.1,290.5 1129.2,287.4 1129.2,284.3 1129.2,281.3 1129.3,278.2 1129.3,275.1 1129.4,272.1 1129.4,269.0 1129.4,272.0 1129.5,275.1 1129.5,278.2 1129.6,281.3 1129.6,284.3 1129.6,287.4 1129.7,290.5 1129.7,293.6 1129.8,296.6 1129.8,299.7 1129.8,302.7 1129.9,305.8 1129.9,308.9 1130.0,311.9 1130.0,315.0 1130.1,318.2 1130.2,321.5 1130.2,324.7 1130.3,327.9 1130.4,331.1 1130.5,334.3 1130.6,337.6 1130.7,340.8 1130.8,344.0 1130.8,347.2 1130.9,350.5 1131.0,353.8 1131.1,356.9 1131.2,360.1 1131.4,363.1 1131.5,366.3 1131.6,369.6 1131.7,372.7 1131.8,375.9 1132.0,379.0 1132.1,382.2 1132.2,385.2 1132.6,381.2 1133.1,378.0 1133.5,373.8 1133.7,370.4 1133.9,367.1 1134.0,363.7 1134.2,360.3 1134.4,357.2 1134.6,353.7 1134.8,350.5 1134.9,347.1 1135.1,343.8 1135.3,340.4 1135.5,343.9 1135.6,347.6 1135.8,351.0 1136.0,354.4 1136.1,358.0 1136.3,361.5 1136.4,364.5 1136.6,367.6 1136.7,370.8 1136.8,373.8 1136.9,377.0 1137.1,380.0 1137.2,382.9 1137.8,387.7 1138.4,391.1 1138.9,390.8 1139.3,391.3 1139.8,390.1 1140.2,390.2 1140.7,389.0 1141.0,385.9 1141.3,382.9 1141.7,379.7 1142.0,377.0 1142.1,373.5 1142.3,370.1 1142.4,366.6 1142.6,363.3 1142.7,359.8 1143.1,356.1 1143.4,352.2 1143.6,355.7 1143.8,359.3 1144.1,362.5 1144.3,365.9 1144.5,369.3 1144.7,372.8 1145.0,376.2 1145.2,379.5 1145.4,383.4 1145.9,384.6 1146.4,386.1 1146.9,388.6 1147.2,384.6 1147.5,381.1 1147.7,377.6 1148.0,373.8 1148.1,370.6 1148.2,367.4 1148.2,364.1 1148.3,360.8 1148.4,357.6 1148.5,354.4 1148.6,351.1 1148.7,348.0 1148.7,344.6 1148.8,341.5 1148.9,338.2 1149.1,334.8 1149.3,331.6 1149.5,328.2 1149.7,325.0 1149.8,328.4 1150.0,332.0 1150.1,335.5 1150.2,338.9 1150.4,342.4 1150.5,345.9 1150.6,349.0 1150.6,352.1 1150.7,355.2 1150.8,358.3 1150.8,361.4 1150.9,364.5 1151.0,367.6 1151.0,370.7 1151.1,373.8 1151.2,376.9 1151.4,379.9 1151.5,383.0 1151.7,386.0 1151.8,389.1 1152.0,392.9 1152.5,393.2 1153.1,395.0 1153.6,393.0 1154.2,392.7 1154.7,391.4 1155.2,391.4 1155.7,390.8 1156.2,390.2 1156.7,390.5 1157.3,391.6 1157.9,392.7 1158.5,395.1 1159.0,394.7 1159.5,395.3 1160.0,396.6 1160.6,396.7 1161.1,397.3 1161.6,397.7 1162.1,396.5 1162.5,396.9 1163.0,396.6 1163.5,397.9 1163.9,398.0 1164.4,397.6 1164.9,397.9 1165.4,398.5 1165.8,398.7 1166.3,398.0 1166.8,398.7 1167.2,397.3 1167.7,397.4 1168.1,396.1 1168.6,395.5 1169.1,395.6 1169.6,394.0 1170.1,392.7 1170.6,391.9 1171.1,392.4 1171.6,393.1 1172.1,393.7 1172.6,394.1 1173.0,394.6 1173.5,394.3 1174.0,395.1 1174.6,394.5 1175.2,392.5 1175.7,394.7 1176.3,395.3 1176.8,396.6 1177.3,395.8 1177.8,396.1 1178.3,396.5 1178.7,395.9 1179.2,395.3 1179.7,396.8 1180.2,396.7 1180.7,395.9 1181.1,395.5 1181.6,397.1 1182.0,396.7 1182.5,395.8 1183.0,396.2 1183.4,396.1 1183.9,397.4 1184.3,396.4 1184.8,397.7 1185.3,395.6 1185.9,392.7 1186.4,391.8 1186.8,388.4 1187.1,385.7 1187.5,382.9 1188.0,380.1 1188.4,378.0 1189.0,382.5 1189.5,384.5 1189.9,388.4 1190.3,391.5 1190.7,395.1 1191.2,395.8 1191.7,395.9 1192.3,396.0 1192.8,395.7 1193.3,397.4 1193.8,396.3 1194.2,395.8 1194.7,395.9 1195.1,393.8 1195.6,394.4 1196.1,391.0 1196.7,390.1 1197.2,388.3 1197.8,384.3 1198.3,381.9 1198.9,386.3 1199.5,389.4 1200.0,391.6 1200.6,393.4 1201.1,395.4 1201.6,396.5 1202.1,397.1 1202.6,397.3 1203.1,397.1 1203.6,396.3 1204.2,397.0 1204.7,396.5 1205.2,395.3 1205.7,394.9 1206.2,395.2 1206.7,394.8 1207.2,395.4 1207.8,394.1 1208.3,393.8 1208.8,394.6 1209.3,392.2 1209.8,391.9 1210.3,390.5 1210.8,394.5 1211.4,397.1 1211.9,398.2 1212.4,397.8 1212.9,399.4 1213.4,400.0 1213.9,399.6 1214.4,400.1 1215.0,400.1 1215.5,398.8 1216.0,399.0 1216.5,399.0 1217.0,398.2 1217.5,397.4 1218.0,397.2 1218.5,396.5 1219.0,395.0 1219.6,392.2 1220.2,392.8 1220.7,394.6 1221.0,391.0 1221.3,387.3 1221.6,383.5 1221.9,379.2 1222.5,375.4 1223.0,373.1 1223.4,376.3 1223.9,379.1 1224.3,383.2 1224.5,386.8 1224.8,390.1 1225.0,393.4 1225.3,397.0 1225.9,398.0 1226.6,398.7 1227.1,398.1 1227.6,395.8 1228.1,396.2 1228.6,392.7 1229.2,389.7 1229.7,387.3 1230.2,387.7 1230.7,387.9 1231.2,388.7 1231.8,389.7 1232.5,391.3 1232.8,388.4 1233.2,385.1 1233.5,381.1 1234.0,379.4 1234.6,378.7 1235.1,377.5 1235.7,380.0 1236.2,381.3 1236.5,384.8 1236.8,387.9 1237.1,391.0 1237.4,393.6 1237.9,394.9 1238.5,397.6 1239.0,398.2 1239.5,398.5 1240.0,399.1 1240.5,399.1 1241.1,400.2 1241.6,399.4 1242.1,399.3 1242.6,400.4 1243.0,400.6 1243.5,401.1 1243.9,401.1 1244.4,401.6 1244.9,401.8 1245.3,401.1 1245.8,401.3 1246.2,400.8 1246.7,401.2 1247.2,401.5 1247.7,400.3 1248.2,401.2 1248.8,400.0 1249.3,400.2 1249.8,400.9 1250.3,398.6 1250.8,397.7 1251.3,397.6 1251.9,396.4 1252.4,396.6 1252.9,394.5 1253.4,395.4 1253.9,394.8 1254.4,394.1 1254.9,394.6 1255.5,395.5 1256.0,397.3 1256.5,397.3 1256.9,397.5 1257.4,397.6 1257.8,398.1 1258.3,398.8 1258.8,397.0 1259.3,395.1 1259.8,392.2 1260.0,389.1 1260.2,386.1 1260.5,383.1 1260.7,379.9 1260.9,376.9 1261.0,373.6 1261.0,370.4 1261.1,367.2 1261.2,364.0 1261.2,360.8 1261.3,357.6 1261.4,354.4 1261.4,351.1 1261.5,347.9 1261.6,344.7 1261.6,341.4 1261.7,338.2 1261.8,334.7 1262.0,331.2 1262.1,327.8 1262.2,324.3 1262.4,320.8 1262.5,317.3 1262.7,320.7 1262.8,324.2 1263.0,327.8 1263.1,331.1 1263.2,334.7 1263.4,338.2 1263.5,341.4 1263.6,344.6 1263.7,347.9 1263.8,351.1 1263.9,354.4 1264.0,357.6 1264.1,360.9 1264.2,364.1 1264.3,367.3 1264.4,370.5 1264.5,373.7 1264.7,377.1 1265.0,380.0 1265.2,382.9 1265.5,386.3 1265.7,388.8 1266.2,391.6 1266.8,395.5 1267.3,398.1 1267.8,397.7 1268.3,397.1 1268.9,393.3 1269.6,390.6 1270.2,390.7 1270.7,392.3 1271.2,395.6 1271.8,397.7 1272.3,398.3 1272.7,397.7 1273.2,398.3 1273.7,399.1 1274.1,398.5 1274.6,398.8 1275.1,398.8 1275.5,397.6 1276.0,399.2 1276.6,399.9 1277.1,399.9 1277.7,402.4 1278.3,400.4 1278.9,398.9 1279.5,399.1 1280.0,396.9 1280.4,395.9 1280.9,393.2 1281.5,394.4 1282.1,393.1 1282.7,393.9" fill="none" stroke="#0000ff" stroke-width="0.9" stroke-linejoin="round" stroke-opacity="1"/>
</svg>
</body></html>
